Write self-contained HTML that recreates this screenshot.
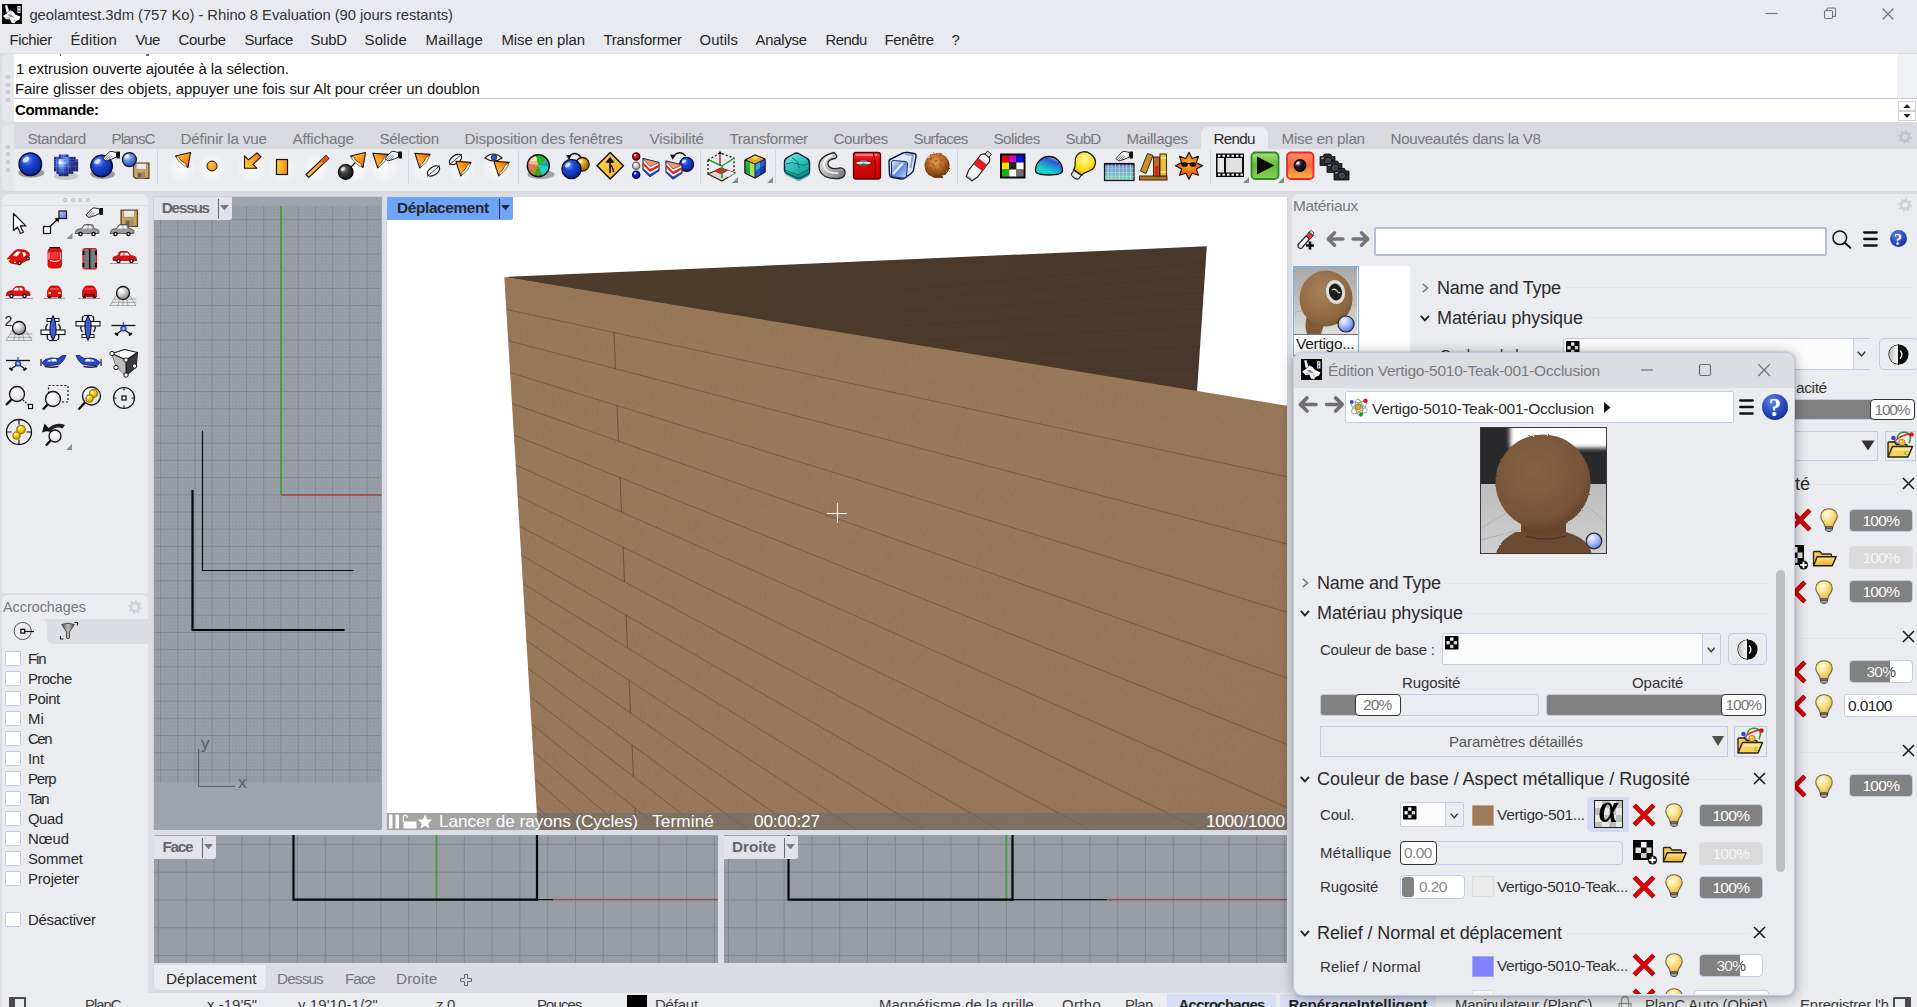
<!DOCTYPE html><html><head><meta charset="utf-8"><title>Rhino</title><style>
html,body{margin:0;padding:0;background:#dddee3;}
#r{position:relative;width:1917px;height:1007px;overflow:hidden;font-family:"Liberation Sans",sans-serif;}
.b{position:absolute;box-sizing:border-box}
.t{position:absolute;white-space:pre;}
svg{overflow:visible}
</style></head><body><div id="r">
<div class="b" style="left:0px;top:0px;width:1917px;height:53px;background:#e9eaef;"></div>
<span class="t" style="left:29.4px;top:8px;font-size:14.8px;line-height:15px;color:#333;letter-spacing:-0.051px;">geolamtest.3dm (757 Ko) - Rhino 8 Evaluation (90 jours restants)</span>
<svg class="b" style="left:2px;top:4px;width:20px;height:20px" viewBox="0 0 21 21"><rect width="21" height="21" fill="#050505"/><path d="M3.200 1.500l2.300-.5 1.800 6.500-2.500 2z" fill="#f4f4f4"/><path d="M1 12.500l4-2.500 3.500-3.500 3 1.500 2.500 3 5.500 2.500-1.500 3-3.500 1.500-1.500 2.500-3-1-1.500-3.500-4 0z" fill="#f6f6f6"/><path d="M5.500 11l3 2.500 4.500 1-3.500-3.500z" fill="#8a8a8a"/><path d="M3.500 14.500l4-1 1.500 2.500z" fill="#b5b5b5"/><path d="M12 16l2 .5-1 2z" fill="#999"/><path d="M16.200 2.200h3.200v7.300h-3.200zM17.300 3.300h1v1.800h-1zM17.300 6.200h1v2.200h-1z" fill="#fff" fill-rule="evenodd"/></svg>
<svg class="b" style="left:1750px;top:0;width:167px;height:28px" viewBox="0 0 167 28"><g stroke="#707070" stroke-width="1.100" fill="none"><path d="M15.5 13.5h12"/><rect x="74.5" y="10.5" width="8" height="8" rx="1.5"/><path d="M77 10.5v-1.5a1 1 0 0 1 1-1h6.5a1 1 0 0 1 1 1v6.5a1 1 0 0 1-1 1h-1.5"/><path d="M132.500 8.500l11 11m0-11l-11 11" stroke-width="1.1"/></g></svg>
<span class="t" style="left:9.5px;top:33px;font-size:14.9px;line-height:15px;color:#262626;letter-spacing:-0.338px;">Fichier</span>
<span class="t" style="left:70.5px;top:33px;font-size:14.9px;line-height:15px;color:#262626;letter-spacing:0.146px;">Édition</span>
<span class="t" style="left:135.5px;top:33px;font-size:14.9px;line-height:15px;color:#262626;letter-spacing:-0.581px;">Vue</span>
<span class="t" style="left:178.5px;top:33px;font-size:14.9px;line-height:15px;color:#262626;letter-spacing:-0.247px;">Courbe</span>
<span class="t" style="left:244.5px;top:33px;font-size:14.9px;line-height:15px;color:#262626;letter-spacing:-0.438px;">Surface</span>
<span class="t" style="left:310.5px;top:33px;font-size:14.9px;line-height:15px;color:#262626;letter-spacing:-0.219px;">SubD</span>
<span class="t" style="left:364.5px;top:33px;font-size:14.9px;line-height:15px;color:#262626;letter-spacing:0.198px;">Solide</span>
<span class="t" style="left:425.5px;top:33px;font-size:14.9px;line-height:15px;color:#262626;letter-spacing:0.270px;">Maillage</span>
<span class="t" style="left:501.5px;top:33px;font-size:14.9px;line-height:15px;color:#262626;letter-spacing:-0.084px;">Mise en plan</span>
<span class="t" style="left:603.5px;top:33px;font-size:14.9px;line-height:15px;color:#262626;letter-spacing:-0.197px;">Transformer</span>
<span class="t" style="left:699.5px;top:33px;font-size:14.9px;line-height:15px;color:#262626;letter-spacing:0.076px;">Outils</span>
<span class="t" style="left:755.5px;top:33px;font-size:14.9px;line-height:15px;color:#262626;letter-spacing:-0.231px;">Analyse</span>
<span class="t" style="left:825.5px;top:33px;font-size:14.9px;line-height:15px;color:#262626;letter-spacing:-0.533px;">Rendu</span>
<span class="t" style="left:884.5px;top:33px;font-size:14.9px;line-height:15px;color:#262626;letter-spacing:-0.284px;">Fenêtre</span>
<span class="t" style="left:951.5px;top:33px;font-size:14.9px;line-height:15px;color:#262626;">?</span>
<div class="b" style="left:2px;top:54px;width:1913px;height:68px;background:#e6e7eb;border-radius:6px 0 0 6px;"></div>
<div class="b" style="left:14px;top:54px;width:1883px;height:68px;background:#fff;"></div>
<div class="b" style="left:14px;top:98px;width:1883px;height:1px;background:#c5c9e0;"></div>
<span class="t" style="left:16.0px;top:62px;font-size:14.9px;line-height:15px;color:#111;letter-spacing:-0.046px;">1 extrusion ouverte ajoutée à la sélection.</span>
<span class="t" style="left:15.0px;top:82px;font-size:14.9px;line-height:15px;color:#111;letter-spacing:-0.029px;">Faire glisser des objets, appuyer une fois sur Alt pour créer un doublon</span>
<span class="t" style="left:15.0px;top:103px;font-size:14.9px;line-height:15px;color:#000;letter-spacing:-0.245px;font-weight:bold;">Commande:</span>
<div class="b" style="left:60px;top:54px;width:1px;height:1.5px;background:#555;"></div><div class="b" style="left:146px;top:54px;width:3px;height:2px;background:#666;"></div>
<div class="b" style="left:5.5px;top:75px;width:3px;height:3px;border:1px solid #b9bac0;border-radius:50%;box-sizing:border-box;width:4px;height:4px;"></div>
<div class="b" style="left:5.5px;top:82.5px;width:3px;height:3px;border:1px solid #b9bac0;border-radius:50%;box-sizing:border-box;width:4px;height:4px;"></div>
<div class="b" style="left:5.5px;top:90px;width:3px;height:3px;border:1px solid #b9bac0;border-radius:50%;box-sizing:border-box;width:4px;height:4px;"></div>
<div class="b" style="left:5.5px;top:97.5px;width:3px;height:3px;border:1px solid #b9bac0;border-radius:50%;box-sizing:border-box;width:4px;height:4px;"></div>
<div class="b" style="left:1897px;top:54px;width:20px;height:44px;background:#eff0f3;"></div>
<div class="b" style="left:1897px;top:98px;width:20px;height:24px;background:#fff;"></div>
<div class="b" style="left:1897px;top:98px;width:20px;height:1px;background:#c5c9e0;"></div>
<div class="b" style="left:1898px;top:101px;width:18px;height:10px;background:#fdfdfd;border:1px solid #cfd0d6;box-sizing:border-box;"></div><div class="b" style="left:1898px;top:111px;width:18px;height:10px;background:#fdfdfd;border:1px solid #cfd0d6;box-sizing:border-box;"></div>
<svg class="b" style="left:1898px;top:101px;width:18px;height:20px" viewBox="0 0 18 20"><path d="M5.5 7l3.500-4 3.500 4zM5.500 13l3.500 4 3.500-4z" fill="#222"/></svg>
<div class="b" style="left:0px;top:122px;width:1917px;height:72px;background:#dddee3;"></div>
<div class="b" style="left:2px;top:125px;width:1915px;height:66px;background:#ebecf0;border-radius:6px 0 0 6px;"></div>
<div class="b" style="left:2px;top:125px;width:12px;height:66px;background:#e6e7eb;border-radius:6px 0 0 6px;"></div>
<div class="b" style="left:14px;top:122px;width:1903px;height:27px;background:#d9dadf;"></div>
<div class="b" style="left:1201px;top:127px;width:67px;height:22.5px;background:#ebecf0;border-radius:7px 7px 0 0;"></div>
<span class="t" style="left:27.5px;top:131px;font-size:15.2px;line-height:15px;color:#76777b;letter-spacing:-0.425px;">Standard</span>
<span class="t" style="left:111.5px;top:131px;font-size:15.2px;line-height:15px;color:#76777b;letter-spacing:-0.999px;">PlansC</span>
<span class="t" style="left:180.5px;top:131px;font-size:15.2px;line-height:15px;color:#76777b;letter-spacing:-0.163px;">Définir la vue</span>
<span class="t" style="left:292.5px;top:131px;font-size:15.2px;line-height:15px;color:#76777b;letter-spacing:-0.188px;">Affichage</span>
<span class="t" style="left:379.5px;top:131px;font-size:15.2px;line-height:15px;color:#76777b;letter-spacing:-0.356px;">Sélection</span>
<span class="t" style="left:464.5px;top:131px;font-size:15.2px;line-height:15px;color:#76777b;letter-spacing:-0.158px;">Disposition des fenêtres</span>
<span class="t" style="left:649.5px;top:131px;font-size:15.2px;line-height:15px;color:#76777b;letter-spacing:-0.102px;">Visibilité</span>
<span class="t" style="left:729.5px;top:131px;font-size:15.2px;line-height:15px;color:#76777b;letter-spacing:-0.353px;">Transformer</span>
<span class="t" style="left:833.5px;top:131px;font-size:15.2px;line-height:15px;color:#76777b;letter-spacing:-0.454px;">Courbes</span>
<span class="t" style="left:913.5px;top:131px;font-size:15.2px;line-height:15px;color:#76777b;letter-spacing:-0.731px;">Surfaces</span>
<span class="t" style="left:993.5px;top:131px;font-size:15.2px;line-height:15px;color:#76777b;letter-spacing:-0.515px;">Solides</span>
<span class="t" style="left:1065.5px;top:131px;font-size:15.2px;line-height:15px;color:#76777b;letter-spacing:-0.720px;">SubD</span>
<span class="t" style="left:1126.5px;top:131px;font-size:15.2px;line-height:15px;color:#76777b;letter-spacing:-0.318px;">Maillages</span>
<span class="t" style="left:1281.5px;top:131px;font-size:15.2px;line-height:15px;color:#76777b;letter-spacing:-0.233px;">Mise en plan</span>
<span class="t" style="left:1390.5px;top:131px;font-size:15.2px;line-height:15px;color:#76777b;letter-spacing:-0.325px;">Nouveautés dans la V8</span>
<span class="t" style="left:1213.5px;top:131px;font-size:15.2px;line-height:15px;color:#2a2a2a;letter-spacing:-0.731px;">Rendu</span>
<div class="b" style="left:5.5px;top:144.7px;width:4px;height:4px;border:1px solid #b9bac0;border-radius:50%;box-sizing:border-box;"></div>
<div class="b" style="left:5.5px;top:152.3px;width:4px;height:4px;border:1px solid #b9bac0;border-radius:50%;box-sizing:border-box;"></div>
<div class="b" style="left:5.5px;top:159.9px;width:4px;height:4px;border:1px solid #b9bac0;border-radius:50%;box-sizing:border-box;"></div>
<div class="b" style="left:5.5px;top:167.5px;width:4px;height:4px;border:1px solid #b9bac0;border-radius:50%;box-sizing:border-box;"></div>
<div class="b" style="left:157px;top:150px;width:1px;height:34px;background:#cfd3e6;"></div>
<div class="b" style="left:408px;top:150px;width:1px;height:34px;background:#cfd3e6;"></div>
<div class="b" style="left:518px;top:150px;width:1px;height:34px;background:#cfd3e6;"></div>
<div class="b" style="left:700px;top:150px;width:1px;height:34px;background:#cfd3e6;"></div>
<div class="b" style="left:775px;top:150px;width:1px;height:34px;background:#cfd3e6;"></div>
<div class="b" style="left:957px;top:150px;width:1px;height:34px;background:#cfd3e6;"></div>
<div class="b" style="left:1210px;top:150px;width:1px;height:34px;background:#cfd3e6;"></div>
<svg class="b" style="left:0;top:0;width:1917px;height:195px" viewBox="0 0 1917 195"><defs><radialGradient id="glow"><stop offset="0" stop-color="#fff" stop-opacity="0.85"/><stop offset="1" stop-color="#fff" stop-opacity="0"/></radialGradient></defs><ellipse cx="31.3" cy="172.775" rx="12.995" ry="5.085" fill="#000" opacity="0.35"/><defs><radialGradient id="g1" cx="0.35" cy="0.3" r="0.8"><stop offset="0" stop-color="#7aa0ff"/><stop offset="0.35" stop-color="#1f48d8"/><stop offset="1" stop-color="#081c7a"/></radialGradient></defs><circle cx="30.3" cy="164.3" r="11.3" fill="url(#g1)" stroke="#050a28" stroke-width="1.300"/><ellipse cx="26.006" cy="159.554" rx="3.616" ry="2.26" fill="#fff" opacity="0.75" transform="rotate(-35 26.006 159.554)"/><ellipse cx="66" cy="176" rx="12" ry="4" fill="#888" opacity="0.35"/><rect x="58.8" y="154.5" width="2.500" height="2.500" fill="#2a3cae"/><rect x="61.2" y="154.5" width="2.500" height="2.500" fill="#3c5fd0"/><rect x="63.6" y="154.5" width="2.500" height="2.500" fill="#3c5fd0"/><rect x="66" y="154.5" width="2.500" height="2.500" fill="#1a2470"/><rect x="54" y="156.9" width="2.500" height="2.500" fill="#1a2470"/><rect x="56.4" y="156.9" width="2.500" height="2.500" fill="#2a3cae"/><rect x="58.8" y="156.9" width="2.500" height="2.500" fill="#2a3cae"/><rect x="61.2" y="156.9" width="2.500" height="2.500" fill="#3c5fd0"/><rect x="63.6" y="156.9" width="2.500" height="2.500" fill="#5d8ae8"/><rect x="66" y="156.9" width="2.500" height="2.500" fill="#5d8ae8"/><rect x="68.4" y="156.9" width="2.500" height="2.500" fill="#2a3cae"/><rect x="70.8" y="156.9" width="2.500" height="2.500" fill="#1a2470"/><rect x="73.2" y="156.9" width="2.500" height="2.500" fill="#1a2470"/><rect x="54" y="159.3" width="2.500" height="2.500" fill="#2a3cae"/><rect x="56.4" y="159.3" width="2.500" height="2.500" fill="#3c5fd0"/><rect x="58.8" y="159.3" width="2.500" height="2.500" fill="#c8e4ff"/><rect x="61.2" y="159.3" width="2.500" height="2.500" fill="#86b6f8"/><rect x="63.6" y="159.3" width="2.500" height="2.500" fill="#5d8ae8"/><rect x="66" y="159.3" width="2.500" height="2.500" fill="#5d8ae8"/><rect x="68.4" y="159.3" width="2.500" height="2.500" fill="#2a3cae"/><rect x="70.8" y="159.3" width="2.500" height="2.500" fill="#1a2470"/><rect x="73.2" y="159.3" width="2.500" height="2.500" fill="#1a2470"/><rect x="75.6" y="159.3" width="2.500" height="2.500" fill="#2a3cae"/><rect x="54" y="161.7" width="2.500" height="2.500" fill="#2a3cae"/><rect x="56.4" y="161.7" width="2.500" height="2.500" fill="#5d8ae8"/><rect x="58.8" y="161.7" width="2.500" height="2.500" fill="#ffffff"/><rect x="61.2" y="161.7" width="2.500" height="2.500" fill="#c8e4ff"/><rect x="63.6" y="161.7" width="2.500" height="2.500" fill="#86b6f8"/><rect x="66" y="161.7" width="2.500" height="2.500" fill="#5d8ae8"/><rect x="68.4" y="161.7" width="2.500" height="2.500" fill="#2a3cae"/><rect x="70.8" y="161.7" width="2.500" height="2.500" fill="#2a3cae"/><rect x="73.2" y="161.7" width="2.500" height="2.500" fill="#1a2470"/><rect x="75.6" y="161.7" width="2.500" height="2.500" fill="#1a2470"/><rect x="54" y="164.1" width="2.500" height="2.500" fill="#2a3cae"/><rect x="56.4" y="164.1" width="2.500" height="2.500" fill="#3c5fd0"/><rect x="58.8" y="164.1" width="2.500" height="2.500" fill="#86b6f8"/><rect x="61.2" y="164.1" width="2.500" height="2.500" fill="#86b6f8"/><rect x="63.6" y="164.1" width="2.500" height="2.500" fill="#5d8ae8"/><rect x="66" y="164.1" width="2.500" height="2.500" fill="#3c5fd0"/><rect x="68.4" y="164.1" width="2.500" height="2.500" fill="#2a3cae"/><rect x="70.8" y="164.1" width="2.500" height="2.500" fill="#1a2470"/><rect x="73.2" y="164.1" width="2.500" height="2.500" fill="#1a2470"/><rect x="75.6" y="164.1" width="2.500" height="2.500" fill="#1a2470"/><rect x="54" y="166.5" width="2.500" height="2.500" fill="#2a3cae"/><rect x="56.4" y="166.5" width="2.500" height="2.500" fill="#2a3cae"/><rect x="58.8" y="166.5" width="2.500" height="2.500" fill="#5d8ae8"/><rect x="61.2" y="166.5" width="2.500" height="2.500" fill="#5d8ae8"/><rect x="63.6" y="166.5" width="2.500" height="2.500" fill="#3c5fd0"/><rect x="66" y="166.5" width="2.500" height="2.500" fill="#2a3cae"/><rect x="68.4" y="166.5" width="2.500" height="2.500" fill="#2a3cae"/><rect x="70.8" y="166.5" width="2.500" height="2.500" fill="#1a2470"/><rect x="73.2" y="166.5" width="2.500" height="2.500" fill="#1a2470"/><rect x="75.6" y="166.5" width="2.500" height="2.500" fill="#1a2470"/><rect x="54" y="168.9" width="2.500" height="2.500" fill="#1a2470"/><rect x="56.4" y="168.9" width="2.500" height="2.500" fill="#2a3cae"/><rect x="58.8" y="168.9" width="2.500" height="2.500" fill="#3c5fd0"/><rect x="61.2" y="168.9" width="2.500" height="2.500" fill="#3c5fd0"/><rect x="63.6" y="168.9" width="2.500" height="2.500" fill="#2a3cae"/><rect x="66" y="168.9" width="2.500" height="2.500" fill="#2a3cae"/><rect x="68.4" y="168.9" width="2.500" height="2.500" fill="#1a2470"/><rect x="70.8" y="168.9" width="2.500" height="2.500" fill="#1a2470"/><rect x="73.2" y="168.9" width="2.500" height="2.500" fill="#1a2470"/><rect x="75.6" y="168.9" width="2.500" height="2.500" fill="#1a2470"/><rect x="56.4" y="171.3" width="2.500" height="2.500" fill="#1a2470"/><rect x="58.8" y="171.3" width="2.500" height="2.500" fill="#2a3cae"/><rect x="61.2" y="171.3" width="2.500" height="2.500" fill="#2a3cae"/><rect x="63.6" y="171.3" width="2.500" height="2.500" fill="#2a3cae"/><rect x="66" y="171.3" width="2.500" height="2.500" fill="#1a2470"/><rect x="68.4" y="171.3" width="2.500" height="2.500" fill="#1a2470"/><rect x="70.8" y="171.3" width="2.500" height="2.500" fill="#1a2470"/><rect x="58.8" y="173.7" width="2.500" height="2.500" fill="#1a2470"/><rect x="61.2" y="173.7" width="2.500" height="2.500" fill="#1a2470"/><rect x="63.6" y="173.7" width="2.500" height="2.500" fill="#1a2470"/><rect x="66" y="173.7" width="2.500" height="2.500" fill="#1a2470"/><ellipse cx="102.6" cy="174.1" rx="12.42" ry="4.86" fill="#000" opacity="0.35"/><defs><radialGradient id="g2" cx="0.35" cy="0.3" r="0.8"><stop offset="0" stop-color="#7aa0ff"/><stop offset="0.35" stop-color="#1f48d8"/><stop offset="1" stop-color="#081c7a"/></radialGradient></defs><circle cx="101.6" cy="166" r="10.8" fill="url(#g2)" stroke="#050a28" stroke-width="1.300"/><ellipse cx="97.496" cy="161.464" rx="3.456" ry="2.16" fill="#fff" opacity="0.75" transform="rotate(-35 97.496 161.464)"/><g transform="translate(103 151)"><path d="M0 7.500L5.500 1.500Q7 0 9 .5L13.500 1.500V6L9 8 3 10z" fill="#fff" stroke="#111" stroke-width="0.900"/><path d="M1.500 8.500l4.500-5M3 9.300l4.500-5M4.800 9.500l4-4.500" stroke="#555" stroke-width="0.700"/><rect x="13.500" y="0.500" width="3.500" height="7" fill="#111"/></g><g transform="translate(132.5 162) scale(1.02941)"><path d="M1 1h15v15H3L1 14z" fill="#c9a560" stroke="#5b431c" stroke-width="1.200"/><rect x="3.500" y="1.500" width="10" height="6" fill="#e8e8e8" stroke="#8a7040" stroke-width="0.500"/><rect x="4.500" y="10" width="8" height="6" fill="#9a8a78"/><rect x="5.500" y="11" width="3" height="4" fill="#7a5a3a"/></g><defs><radialGradient id="g3" cx="0.35" cy="0.3" r="0.8"><stop offset="0" stop-color="#e8f4ff"/><stop offset="0.35" stop-color="#6a98e0"/><stop offset="1" stop-color="#2040a0"/></radialGradient></defs><circle cx="129.4" cy="159.6" r="7" fill="url(#g3)" stroke="#101840" stroke-width="1.300"/><ellipse cx="126.74" cy="156.66" rx="2.24" ry="1.4" fill="#fff" opacity="0.75" transform="rotate(-35 126.74 156.66)"/><circle cx="182" cy="168" r="15" fill="url(#glow)"/><circle cx="212" cy="168" r="15" fill="url(#glow)"/><circle cx="251" cy="168" r="15" fill="url(#glow)"/><circle cx="282" cy="168" r="15" fill="url(#glow)"/><circle cx="316" cy="168" r="15" fill="url(#glow)"/><circle cx="356" cy="168" r="15" fill="url(#glow)"/><circle cx="384" cy="168" r="15" fill="url(#glow)"/><circle cx="425" cy="168" r="15" fill="url(#glow)"/><circle cx="462" cy="168" r="15" fill="url(#glow)"/><circle cx="497" cy="168" r="15" fill="url(#glow)"/><g transform="translate(175 152) scale(1) rotate(0 8 8)"><defs><linearGradient id="g4" x1="0" y1="0" x2="1" y2="1"><stop offset="0" stop-color="#ffd24a"/><stop offset="0.5" stop-color="#ff9a1f"/><stop offset="1" stop-color="#e0560f"/></linearGradient></defs><path d="M0.500 4L15.500 0.500 13 15.500z" fill="url(#g4)" stroke="#1a1208" stroke-width="1.100" stroke-linejoin="round"/><path d="M0.800 4.200Q5 13 12.800 15.200L10 11Q5 9 3.500 5z" fill="#fff3cf" stroke="#1a1208" stroke-width="0.500"/></g><defs><radialGradient id="g5" cx="0.4" cy="0.35" r="0.7"><stop offset="0" stop-color="#ffc24a"/><stop offset="1" stop-color="#f08a10"/></radialGradient></defs><circle cx="212" cy="166" r="5" fill="url(#g5)" stroke="#1a1208" stroke-width="1"/><defs><linearGradient id="g6" x1="1" y1="0" x2="0" y2="1"><stop offset="0" stop-color="#f07a10"/><stop offset="1" stop-color="#ffd040"/></linearGradient></defs><path d="M257 152.800l4 4-8 7.500 4 4h-12.500v-12.500l4 4z" fill="url(#g6)" stroke="#1a1208" stroke-width="1.100" stroke-linejoin="round"/><defs><linearGradient id="g7" x1="0" x2="1"><stop offset="0" stop-color="#ffd040"/><stop offset="1" stop-color="#f58a18"/></linearGradient></defs><rect x="276.500" y="159.500" width="11" height="15" fill="url(#g7)" stroke="#1a1208" stroke-width="1.200"/><path d="M306 174.500L326 155.500l2.800 3L308.800 177.500z" fill="url(#g7)" stroke="#1a1208" stroke-width="1.100"/><path d="M320.500 160.800l5.500-5.300 2.800 3-5.500 5.200z" fill="#e8501a"/><path d="M346 172l10-10" stroke="#111" stroke-width="1.300"/><defs><radialGradient id="g8" cx="0.35" cy="0.3" r="0.8"><stop offset="0" stop-color="#bbb"/><stop offset="0.35" stop-color="#444"/><stop offset="1" stop-color="#0a0a0a"/></radialGradient></defs><circle cx="345.7" cy="172" r="7.3" fill="url(#g8)" stroke="#000" stroke-width="1.300"/><ellipse cx="342.926" cy="168.934" rx="2.336" ry="1.46" fill="#fff" opacity="0.75" transform="rotate(-35 342.926 168.934)"/><g transform="translate(350 152) scale(1) rotate(0 8 8)"><defs><linearGradient id="g9" x1="0" y1="0" x2="1" y2="1"><stop offset="0" stop-color="#ffd24a"/><stop offset="0.5" stop-color="#ff9a1f"/><stop offset="1" stop-color="#e0560f"/></linearGradient></defs><path d="M0.500 4L15.500 0.500 13 15.500z" fill="url(#g9)" stroke="#1a1208" stroke-width="1.100" stroke-linejoin="round"/><path d="M0.800 4.200Q5 13 12.800 15.200L10 11Q5 9 3.500 5z" fill="#fff3cf" stroke="#1a1208" stroke-width="0.500"/></g><g transform="translate(373 152) scale(1) rotate(-95 8 8)"><defs><linearGradient id="g10" x1="0" y1="0" x2="1" y2="1"><stop offset="0" stop-color="#ffd24a"/><stop offset="0.5" stop-color="#ff9a1f"/><stop offset="1" stop-color="#e0560f"/></linearGradient></defs><path d="M0.500 4L15.500 0.500 13 15.500z" fill="url(#g10)" stroke="#1a1208" stroke-width="1.100" stroke-linejoin="round"/><path d="M0.800 4.200Q5 13 12.800 15.200L10 11Q5 9 3.500 5z" fill="#fff3cf" stroke="#1a1208" stroke-width="0.500"/></g><g transform="translate(385 151)"><path d="M0 7.500L5.500 1.500Q7 0 9 .5L13.500 1.500V6L9 8 3 10z" fill="#fff" stroke="#111" stroke-width="0.900"/><path d="M1.500 8.500l4.500-5M3 9.300l4.500-5M4.800 9.500l4-4.500" stroke="#555" stroke-width="0.700"/><rect x="13.500" y="0.500" width="3.500" height="7" fill="#111"/></g><g transform="translate(415 152) scale(1) rotate(-95 8 8)"><defs><linearGradient id="g11" x1="0" y1="0" x2="1" y2="1"><stop offset="0" stop-color="#ffd24a"/><stop offset="0.5" stop-color="#ff9a1f"/><stop offset="1" stop-color="#e0560f"/></linearGradient></defs><path d="M0.500 4L15.500 0.500 13 15.500z" fill="url(#g11)" stroke="#1a1208" stroke-width="1.100" stroke-linejoin="round"/><path d="M0.800 4.200Q5 13 12.800 15.200L10 11Q5 9 3.500 5z" fill="#fff3cf" stroke="#1a1208" stroke-width="0.500"/></g><ellipse cx="433.500" cy="171" rx="7" ry="4" fill="none" stroke="#111" stroke-width="1.100" transform="rotate(-35 433.500 171)"/><path d="M427 176.500l13-11" stroke="#111" stroke-width="0.800"/><ellipse cx="455.500" cy="159.500" rx="7" ry="4" fill="none" stroke="#111" stroke-width="1.100" transform="rotate(-35 455.500 159.500)"/><path d="M449 165l13-11" stroke="#111" stroke-width="0.800"/><g transform="translate(456 160) scale(1) rotate(-95 8 8)"><defs><linearGradient id="g12" x1="0" y1="0" x2="1" y2="1"><stop offset="0" stop-color="#ffd24a"/><stop offset="0.5" stop-color="#ff9a1f"/><stop offset="1" stop-color="#e0560f"/></linearGradient></defs><path d="M0.500 4L15.500 0.500 13 15.500z" fill="url(#g12)" stroke="#1a1208" stroke-width="1.100" stroke-linejoin="round"/><path d="M0.800 4.200Q5 13 12.800 15.200L10 11Q5 9 3.500 5z" fill="#fff3cf" stroke="#1a1208" stroke-width="0.500"/></g><path d="M485 158q8-8 17 0q-8 6-17 0z" fill="#fff" stroke="#111" stroke-width="1.100"/><circle cx="494" cy="157.500" r="2.800" fill="#3a50d0" stroke="#111" stroke-width="0.700"/><g transform="translate(494 160) scale(1) rotate(-95 8 8)"><defs><linearGradient id="g13" x1="0" y1="0" x2="1" y2="1"><stop offset="0" stop-color="#ffd24a"/><stop offset="0.5" stop-color="#ff9a1f"/><stop offset="1" stop-color="#e0560f"/></linearGradient></defs><path d="M0.500 4L15.500 0.500 13 15.500z" fill="url(#g13)" stroke="#1a1208" stroke-width="1.100" stroke-linejoin="round"/><path d="M0.800 4.200Q5 13 12.800 15.200L10 11Q5 9 3.500 5z" fill="#fff3cf" stroke="#1a1208" stroke-width="0.500"/></g><ellipse cx="541" cy="174.500" rx="13.500" ry="4.500" fill="#000" opacity="0.3"/><clipPath id="g14"><circle cx="538.300" cy="165.700" r="11"/></clipPath><g clip-path="url(#g14)"><rect x="527" y="154" width="23" height="24" fill="#e8a040"/><path d="M538 165l-3-12h14v6z" fill="#22b830"/><path d="M538 165l12-6v8z" fill="#1aa0a8"/><path d="M538 165l12 2v8l-6 4z" fill="#20d0c8"/><path d="M538 165l6 14h-12z" fill="#38a028"/><path d="M538 165l-6 14h-6v-8z" fill="#c08830"/><path d="M538 165l-12 6v-8z" fill="#e87070"/><path d="M538 165l-12-2v-8l9-2z" fill="#f0c078"/><ellipse cx="533" cy="159" rx="4" ry="2.500" fill="#fff" opacity="0.6"/></g><circle cx="538.300" cy="165.700" r="11" fill="none" stroke="#111" stroke-width="1.400"/><defs><radialGradient id="g15" cx="0.35" cy="0.3" r="0.8"><stop offset="0" stop-color="#fff0b0"/><stop offset="0.35" stop-color="#e8a820"/><stop offset="1" stop-color="#7a4a08"/></radialGradient></defs><circle cx="582.4" cy="164.3" r="6.8" fill="url(#g15)" stroke="#2a1a04" stroke-width="1.300"/><ellipse cx="579.816" cy="161.444" rx="2.176" ry="1.36" fill="#fff" opacity="0.75" transform="rotate(-35 579.816 161.444)"/><defs><radialGradient id="g16" cx="0.35" cy="0.3" r="0.8"><stop offset="0" stop-color="#7aa0ff"/><stop offset="0.35" stop-color="#1f48d8"/><stop offset="1" stop-color="#081c7a"/></radialGradient></defs><circle cx="571.5" cy="169" r="9.6" fill="url(#g16)" stroke="#050a28" stroke-width="1.300"/><ellipse cx="567.852" cy="164.968" rx="3.072" ry="1.92" fill="#fff" opacity="0.75" transform="rotate(-35 567.852 164.968)"/><path d="M569 157q5-7 12 0" fill="none" stroke="#111" stroke-width="1.300"/><path d="M566 155l5.500 0-2.500 5z" fill="#111"/><defs><linearGradient id="g17" x1="0" y1="0" x2="1" y2="1"><stop offset="0" stop-color="#ffd858"/><stop offset="1" stop-color="#f0b028"/></linearGradient></defs><path d="M610.200 152.500L623.500 165.700 610.200 179 597 165.700z" fill="url(#g17)" stroke="#111" stroke-width="1.500" stroke-linejoin="round"/><path d="M610 173v-13M607 162l3-4 3 4zM613.500 172q-.5-5-3-7" stroke="#111" stroke-width="1.600" fill="none"/><path d="M606.800 162.300l3.200-4.800 3.200 4.800z" fill="#111"/><defs><radialGradient id="g18" cx="0.35" cy="0.3" r="0.8"><stop offset="0" stop-color="#ffb0a0"/><stop offset="0.35" stop-color="#e01010"/><stop offset="1" stop-color="#800"/></radialGradient></defs><circle cx="636.2" cy="156.6" r="3.6" fill="url(#g18)" stroke="#400" stroke-width="1.300"/><ellipse cx="634.832" cy="155.088" rx="1.152" ry="0.72" fill="#fff" opacity="0.75" transform="rotate(-35 634.832 155.088)"/><defs><radialGradient id="g19" cx="0.35" cy="0.3" r="0.8"><stop offset="0" stop-color="#fff"/><stop offset="0.35" stop-color="#ddd"/><stop offset="1" stop-color="#888"/></radialGradient></defs><circle cx="636.2" cy="165.7" r="3.6" fill="url(#g19)" stroke="#666" stroke-width="1.300"/><ellipse cx="634.832" cy="164.188" rx="1.152" ry="0.72" fill="#fff" opacity="0.75" transform="rotate(-35 634.832 164.188)"/><defs><radialGradient id="g20" cx="0.35" cy="0.3" r="0.8"><stop offset="0" stop-color="#9ab0ff"/><stop offset="0.35" stop-color="#1030e0"/><stop offset="1" stop-color="#008"/></radialGradient></defs><circle cx="636.2" cy="174.8" r="3.6" fill="url(#g20)" stroke="#004" stroke-width="1.300"/><ellipse cx="634.832" cy="173.288" rx="1.152" ry="0.72" fill="#fff" opacity="0.75" transform="rotate(-35 634.832 173.288)"/><g transform="translate(643 158.5)"><path d="M0 0l16 4v8l-9 6-7-7z" fill="#fff" stroke="#1a1a40" stroke-width="1.100" stroke-linejoin="round"/><path d="M0 0l16 4-9 4z" fill="#ff9a60" stroke="#1a1a40" stroke-width="0.600"/><path d="M0 3.500l7 7 9-4.500v2.500l-9 5-7-7z" fill="#e02818"/><path d="M0 9.500l7 6 9-5v1.500l-9 6-7-7z" fill="#2848c8"/></g><defs><radialGradient id="g21" cx="0.35" cy="0.3" r="0.8"><stop offset="0" stop-color="#7aa0ff"/><stop offset="0.35" stop-color="#1f48d8"/><stop offset="1" stop-color="#081c7a"/></radialGradient></defs><circle cx="686.6" cy="164.3" r="7" fill="url(#g21)" stroke="#050a28" stroke-width="1.300"/><ellipse cx="683.94" cy="161.36" rx="2.24" ry="1.4" fill="#fff" opacity="0.75" transform="rotate(-35 683.94 161.36)"/><g transform="translate(666 161)"><path d="M0 0l16 4v8l-9 6-7-7z" fill="#fff" stroke="#1a1a40" stroke-width="1.100" stroke-linejoin="round"/><path d="M0 0l16 4-9 4z" fill="#ff9a60" stroke="#1a1a40" stroke-width="0.600"/><path d="M0 3.500l7 7 9-4.500v2.500l-9 5-7-7z" fill="#e02818"/><path d="M0 9.500l7 6 9-5v1.500l-9 6-7-7z" fill="#2848c8"/></g><path d="M673 157q6-8 13-1" fill="none" stroke="#111" stroke-width="1.300"/><path d="M670 154.500l5.500.5-2.800 4.800z" fill="#111"/><g fill="none" stroke="#111" stroke-width="1.300" stroke-dasharray="2 2"><path d="M708 160l12-7 14 5v14M708 160v14"/></g><path d="M708 174l13-6 14 5-13 8z" fill="#d8d8d8" stroke="#3a2010" stroke-width="1.100"/><path d="M721 168l7 2.500-6.500 4-7-3z" fill="#e82020"/><path d="M728.500 170.500l6.500 2.500-6.500 4-6.500-2.500z" fill="#eee"/><path d="M722 178v-12" stroke="#18a028" stroke-width="1.600"/><path d="M722 166l-13-6M722 166l12-8" stroke="#18a028" stroke-width="1.400"/><path d="M720 166v-13" stroke="#a03020" stroke-width="1.400"/><path d="M720 151l-2 3h4z" fill="#111"/><path d="M738 183v-6l-6 6z" fill="#8a8b90"/><path d="M745 160l10-5 10 4v13l-10 6-10-5z" fill="#68c848" stroke="#1a1a30" stroke-width="1.200" stroke-linejoin="round"/><path d="M745 160l10-5 10 4-10 5z" fill="#f0a030"/><path d="M750 157.500l5-2.500 5 2-5 2.500z" fill="#e8e040"/><path d="M755 164l10-5v13l-10 6z" fill="#2858d8"/><path d="M755 164l5-2.500v6.500l-5 3z" fill="#30b0c0"/><path d="M760 168l5-2.500v6.500l-5 3z" fill="#1838a8"/><path d="M745 160l5 2v6.500l-5-2.200z" fill="#20b838"/><path d="M750 168.500l5 2.200v7.300l-5-2.500z" fill="#a8e860"/><path d="M745 166.300l5 2.200v6.500l-5-2z" fill="#28a030"/><path d="M750 162l5 2v6.700l-5-2.200z" fill="#b0e058"/><path d="M745 160l10-5 10 4v13l-10 6-10-5zM755 164v14M745 160l10 4 10-5" fill="none" stroke="#1a1a30" stroke-width="1"/><path d="M773 183v-6l-6 6z" fill="#8a8b90"/><defs><linearGradient id="g22" x1="0" y1="0" x2="0.600" y2="1"><stop offset="0" stop-color="#a8f4f0"/><stop offset="0.4" stop-color="#38d0c8"/><stop offset="1" stop-color="#109890"/></linearGradient></defs><path d="M784.500 162q0-3 3-4.500l7-4q2-1 4 0l8 4.500q3 1.500 3 5v8.500q0 2-2 3l-7 3.500q-2 1-4 0l-10-5q-2-1-2-3z" fill="url(#g22)" stroke="#0a1838" stroke-width="1.400"/><path d="M785 170l13 5 11-5.500M798 175v4M792 158q7 3 7 10M786 164q6-3 12 0 6 3 11-1" fill="none" stroke="#0a6868" stroke-width="0.900"/><path d="M785 171l13 5 11.500-5.500v3.500q0 2-2 3l-7 3.500q-2 1-4 0l-10-5q-2-1-2-3z" fill="#0a8880" opacity="0.55"/><defs><linearGradient id="g23" x1="0" y1="0" x2="1" y2="1"><stop offset="0" stop-color="#f4f4f4"/><stop offset="0.5" stop-color="#b8b8b8"/><stop offset="1" stop-color="#707070"/></linearGradient></defs><path d="M834 152.500q-16 4-15 15 2 12 20 11 7-1 6-7-1-5-8-3-7 1-9-4-1-5 7-6 4-2-1-6z" fill="url(#g23)" stroke="#222" stroke-width="1.300"/><path d="M832 155q-9 4-8 11 2 8 14 7" fill="none" stroke="#fff" stroke-width="1.800" opacity="0.8"/><defs><linearGradient id="g24" x1="0" y1="0" x2="0" y2="1"><stop offset="0" stop-color="#ff4a4a"/><stop offset="0.25" stop-color="#e80808"/><stop offset="1" stop-color="#c00000"/></linearGradient></defs><rect x="853.500" y="152.500" width="27" height="26.500" rx="2.500" fill="url(#g24)" stroke="#5a0000" stroke-width="1.300"/><path d="M856 155h21" stroke="#ff9a9a" stroke-width="1.500"/><path d="M873.500 153q3 12 1 26" stroke="#600" stroke-width="1.100" fill="none"/><ellipse cx="863.500" cy="163" rx="8" ry="2.300" fill="#ddd" stroke="#400" stroke-width="0.900"/><ellipse cx="863.500" cy="165" rx="3.500" ry="1.500" fill="#555"/><ellipse cx="863.500" cy="161" rx="3" ry="1.200" fill="#777"/><defs><linearGradient id="g25" x1="0" y1="0" x2="1" y2="1"><stop offset="0" stop-color="#e8f0ff"/><stop offset="0.5" stop-color="#6088e0"/><stop offset="1" stop-color="#c8d8ff"/></linearGradient></defs><path d="M889 162q0-3 3-3.500l11-5.500q2-1 5-.5l6 1q2.500.5 2 3l-2.500 13.500q-.5 2-2.500 3.500l-6 4.500q-2 1.500-4 1l-8.500-1.500q-3-.5-3-3.500z" fill="#e0e8f8" stroke="#0a1848" stroke-width="1.400"/><path d="M891.500 162.500q0-2 2-2l12 1q2 0 2 2.500l-1 12q0 2-2.500 2l-10.500-1q-2 0-2-2z" fill="url(#g25)" stroke="#0a1848" stroke-width="0.900"/><path d="M893 174l10-11" stroke="#fff" stroke-width="2.500" opacity="0.8"/><path d="M905 154l8 1.200-2.500 13" stroke="#8aa0d8" stroke-width="2" fill="none"/><defs><radialGradient id="g26" cx="0.45" cy="0.35" r="0.7"><stop offset="0" stop-color="#eea060"/><stop offset="0.5" stop-color="#b8642a"/><stop offset="1" stop-color="#4a2006"/></radialGradient><filter id="fz" x="-10%" y="-10%" width="120%" height="120%"><feTurbulence type="fractalNoise" baseFrequency="0.35" numOctaves="2" seed="5" result="n"/><feDisplacementMap in="SourceGraphic" in2="n" scale="3.500"/></filter><filter id="fz2" x="0" y="0" width="100%%" height="100%%"><feTurbulence type="fractalNoise" baseFrequency="0.4" numOctaves="2" seed="8"/><feColorMatrix type="matrix" values="0 0 0 0 0.2  0 0 0 0 0.08  0 0 0 0 0  0 0 0 -3 1.700"/><feComposite in2="SourceGraphic" operator="in"/></filter></defs><circle cx="937" cy="165.500" r="12.500" fill="url(#g26)" filter="url(#fz)"/><circle cx="937" cy="165.500" r="12" fill="#000" filter="url(#fz2)" opacity="0.7"/><g transform="rotate(-52 979 166)"><path d="M963 162.500l6-2h20l3 2v7l-3 2h-20l-6-2z" fill="#f4f4f4" stroke="#222" stroke-width="1.200"/><rect x="977" y="160.500" width="8" height="11" fill="#e02020"/><rect x="992" y="163.500" width="4" height="5" fill="#ddd" stroke="#222" stroke-width="0.900"/><path d="M964 164v4" stroke="#999" stroke-width="1.500"/></g><rect x="1000" y="153.500" width="25.500" height="25" fill="#0a0a0a"/><rect x="1002" y="155.5" width="7.200" height="7" fill="#e80000"/><rect x="1009.2" y="155.5" width="7.200" height="7" fill="#c010c0"/><rect x="1016.4" y="155.5" width="7.200" height="7" fill="#0010e8"/><rect x="1002" y="162.5" width="7.200" height="7" fill="#f8e000"/><rect x="1009.2" y="162.5" width="7.200" height="7" fill="#222"/><rect x="1016.4" y="162.5" width="7.200" height="7" fill="#fff"/><rect x="1002" y="169.5" width="7.200" height="7" fill="#18b018"/><rect x="1009.2" y="169.5" width="7.200" height="7" fill="#fff"/><rect x="1016.4" y="169.5" width="7.200" height="7" fill="#707070"/><defs><linearGradient id="g27" x1="0.800" y1="0" x2="0.200" y2="1"><stop offset="0" stop-color="#f8e8a0"/><stop offset="0.25" stop-color="#2858d8"/><stop offset="0.7" stop-color="#20c8d0"/><stop offset="1" stop-color="#18d8c0"/></linearGradient></defs><path d="M1035.500 170.500a13.500 14 0 0 1 27 0q0 4.500-13.500 4.500t-13.500-4.500z" fill="url(#g27)" stroke="#111" stroke-width="1.300"/><defs><radialGradient id="g28" cx="0.4" cy="0.35" r="0.7"><stop offset="0" stop-color="#fff8a0"/><stop offset="0.6" stop-color="#ffe020"/><stop offset="1" stop-color="#e8b800"/></radialGradient></defs><g transform="rotate(35 1083 165)"><path d="M1083 151.500c-6.500 0-10.500 4.500-10.500 9.500 0 4 2.500 6 4 8.500 1 1.500 1.500 3 1.500 4.500h10c0-1.500.5-3 1.500-4.500 1.500-2.500 4-4.500 4-8.500 0-5-4-9.500-10.500-9.500z" fill="url(#g28)" stroke="#222" stroke-width="1.300"/><path d="M1078.500 174.500h9v3.500q0 2.500-4.500 2.500t-4.500-2.500z" fill="#e8e8e8" stroke="#222" stroke-width="1.100"/></g><defs><linearGradient id="g29" x1="0" y1="0" x2="0" y2="1"><stop offset="0" stop-color="#7088d8"/><stop offset="1" stop-color="#78d8b0"/></linearGradient></defs><rect x="1104.500" y="163.500" width="29.500" height="17" fill="url(#g29)" stroke="#111" stroke-width="1.200"/><path d="M1104.500 164h29.500" stroke="#111" stroke-width="1.500"/><path d="M1108.2 164v16" stroke="#d8e8f8" stroke-width="0.700" opacity="0.8"/><path d="M1111.9 164v16" stroke="#d8e8f8" stroke-width="0.700" opacity="0.8"/><path d="M1115.6 164v16" stroke="#d8e8f8" stroke-width="0.700" opacity="0.8"/><path d="M1119.3 164v16" stroke="#d8e8f8" stroke-width="0.700" opacity="0.8"/><path d="M1123 164v16" stroke="#d8e8f8" stroke-width="0.700" opacity="0.8"/><path d="M1126.7 164v16" stroke="#d8e8f8" stroke-width="0.700" opacity="0.8"/><path d="M1130.4 164v16" stroke="#d8e8f8" stroke-width="0.700" opacity="0.8"/><path d="M1105 168.2h29" stroke="#d8e8f8" stroke-width="0.600" opacity="0.7"/><path d="M1105 172.4h29" stroke="#d8e8f8" stroke-width="0.600" opacity="0.7"/><path d="M1105 176.6h29" stroke="#d8e8f8" stroke-width="0.600" opacity="0.7"/><g transform="translate(1116 151)"><path d="M0 7.500L5.500 1.500Q7 0 9 .5L13.500 1.500V6L9 8 3 10z" fill="#fff" stroke="#111" stroke-width="0.900"/><path d="M1.500 8.500l4.500-5M3 9.300l4.500-5M4.800 9.500l4-4.500" stroke="#555" stroke-width="0.700"/><rect x="13.500" y="0.500" width="3.500" height="7" fill="#111"/></g><rect x="1139.500" y="176" width="27.500" height="4" fill="#b07828" stroke="#3a2408" stroke-width="1"/><path d="M1140.500 171l7-17.500 5.500 2-7 18z" fill="#c89030" stroke="#3a2408" stroke-width="1"/><rect x="1153.500" y="157" width="6" height="19" fill="#c06820" stroke="#3a2408" stroke-width="1"/><rect x="1155" y="166" width="3.500" height="9" fill="#e02020"/><rect x="1160" y="154" width="6.500" height="22" fill="#e8c038" stroke="#3a2408" stroke-width="1"/><path d="M1160.500 158h6M1160.500 172h6" stroke="#fff" stroke-width="0.800"/><defs><radialGradient id="g30" cx="0.5" cy="0.4" r="0.6"><stop offset="0" stop-color="#ffb020"/><stop offset="1" stop-color="#e84808"/></radialGradient></defs><path d="M1189.0 152.3L1192.1 158.4L1198.5 156.3L1196.4 162.7L1202.5 165.8L1196.4 168.9L1198.5 175.3L1192.1 173.2L1189.0 179.3L1185.9 173.2L1179.5 175.3L1181.6 168.9L1175.5 165.8L1181.6 162.7L1179.5 156.3L1185.9 158.4z" fill="url(#g30)" stroke="#111" stroke-width="1.100" stroke-linejoin="round"/><ellipse cx="1184.500" cy="164.500" rx="3.300" ry="2.300" fill="#111"/><ellipse cx="1193" cy="164.500" rx="3.300" ry="2.300" fill="#111"/><path d="M1181 163.500h15" stroke="#111" stroke-width="1.100"/><rect x="1216" y="153.500" width="28" height="23.500" fill="#0a0a0a"/><rect x="1217.500" y="158" width="6.500" height="14.500" fill="#e8e8e8"/><rect x="1226" y="158" width="16" height="14.500" fill="#e0e0e0"/><rect x="1218" y="154.800" width="2.400" height="2" fill="#fff"/><rect x="1218" y="173.700" width="2.400" height="2" fill="#fff"/><rect x="1222.5" y="154.800" width="2.400" height="2" fill="#fff"/><rect x="1222.5" y="173.700" width="2.400" height="2" fill="#fff"/><rect x="1227" y="154.800" width="2.400" height="2" fill="#fff"/><rect x="1227" y="173.700" width="2.400" height="2" fill="#fff"/><rect x="1231.5" y="154.800" width="2.400" height="2" fill="#fff"/><rect x="1231.5" y="173.700" width="2.400" height="2" fill="#fff"/><rect x="1236" y="154.800" width="2.400" height="2" fill="#fff"/><rect x="1236" y="173.700" width="2.400" height="2" fill="#fff"/><rect x="1240.5" y="154.800" width="2.400" height="2" fill="#fff"/><rect x="1240.5" y="173.700" width="2.400" height="2" fill="#fff"/><path d="M1249 183v-6l-6 6z" fill="#8a8b90"/><defs><linearGradient id="g31" x1="0" y1="0" x2="0" y2="1"><stop offset="0" stop-color="#a8e080"/><stop offset="0.45" stop-color="#68b838"/><stop offset="1" stop-color="#88d050"/></linearGradient></defs><rect x="1251.500" y="152.500" width="27" height="26.500" rx="4" fill="url(#g31)" stroke="#2a8a2a" stroke-width="1.800"/><path d="M1257 156.500l17.500 9-17.500 9z" fill="#0a0a0a"/><path d="M1284 183v-6l-6 6z" fill="#8a8b90"/><defs><linearGradient id="g32" x1="0" y1="0" x2="0" y2="1"><stop offset="0" stop-color="#ff8a70"/><stop offset="0.5" stop-color="#f86838"/><stop offset="1" stop-color="#ffb848"/></linearGradient></defs><rect x="1287" y="152.500" width="26.500" height="26.500" rx="4" fill="url(#g32)" stroke="#e82828" stroke-width="1.800"/><defs><radialGradient id="g33" cx="0.35" cy="0.3" r="0.8"><stop offset="0" stop-color="#ccc"/><stop offset="0.35" stop-color="#222"/><stop offset="1" stop-color="#000"/></radialGradient></defs><circle cx="1300" cy="165.5" r="5.8" fill="url(#g33)" stroke="#000" stroke-width="1.300"/><ellipse cx="1297.8" cy="163.064" rx="1.856" ry="1.16" fill="#fff" opacity="0.75" transform="rotate(-35 1297.8 163.064)"/><g transform="translate(1320 153)"><path d="M0 3.500h3l1.500-2.500h6l1.500 2.500h3v9h-15z" fill="#2a2a2e" stroke="#0a0a0a" stroke-width="0.800"/><circle cx="8" cy="8" r="3.600" fill="#555" stroke="#000" stroke-width="0.800"/><circle cx="8" cy="8" r="1.800" fill="#2a3a6a"/><rect x="1" y="4.500" width="3" height="1.500" fill="#888"/></g><g transform="translate(1327 160)"><path d="M0 3.500h3l1.500-2.500h6l1.500 2.500h3v9h-15z" fill="#2a2a2e" stroke="#0a0a0a" stroke-width="0.800"/><circle cx="8" cy="8" r="3.600" fill="#555" stroke="#000" stroke-width="0.800"/><circle cx="8" cy="8" r="1.800" fill="#2a3a6a"/><rect x="1" y="4.500" width="3" height="1.500" fill="#888"/></g><g transform="translate(1334 167.5)"><path d="M0 3.500h3l1.500-2.500h6l1.500 2.500h3v9h-15z" fill="#2a2a2e" stroke="#0a0a0a" stroke-width="0.800"/><circle cx="8" cy="8" r="3.600" fill="#555" stroke="#000" stroke-width="0.800"/><circle cx="8" cy="8" r="1.800" fill="#2a3a6a"/><rect x="1" y="4.500" width="3" height="1.500" fill="#888"/></g></svg>
<svg class="b" style="left:1896.5px;top:129px;width:16px;height:16px" viewBox="0 0 16 16"><path d="M14.97 8.69L14.70 10.03L12.57 10.44L12.00 11.29L12.44 13.41L11.30 14.17L9.50 12.96L8.51 13.16L7.31 14.97L5.97 14.70L5.56 12.57L4.71 12.00L2.59 12.44L1.83 11.30L3.04 9.50L2.84 8.51L1.03 7.31L1.30 5.97L3.43 5.56L4.00 4.71L3.56 2.59L4.70 1.83L6.50 3.04L7.49 2.84L8.69 1.03L10.03 1.30L10.44 3.43L11.29 4.00L13.41 3.56L14.17 4.70L12.96 6.50L13.16 7.49z" fill="#c4c5ca"/><circle cx="8" cy="8" r="2.52" fill="#d9dadf"/></svg>
<div class="b" style="left:0px;top:191px;width:1917px;height:816px;background:#dddee3;"></div>
<div class="b" style="left:0px;top:191px;width:1917px;height:3px;background:#dadbe0;"></div>
<div class="b" style="left:2px;top:194px;width:146px;height:398.5px;background:#ebecf0;border-radius:7px 7px 0 0;"></div>
<div class="b" style="left:2px;top:205px;width:146px;height:1px;background:#dcdde2;"></div>
<div class="b" style="left:63px;top:197.5px;width:4px;height:4px;border:1px solid #b9bac0;border-radius:50%;box-sizing:border-box;"></div>
<div class="b" style="left:70.5px;top:197.5px;width:4px;height:4px;border:1px solid #b9bac0;border-radius:50%;box-sizing:border-box;"></div>
<div class="b" style="left:78px;top:197.5px;width:4px;height:4px;border:1px solid #b9bac0;border-radius:50%;box-sizing:border-box;"></div>
<div class="b" style="left:85.5px;top:197.5px;width:4px;height:4px;border:1px solid #b9bac0;border-radius:50%;box-sizing:border-box;"></div>
<svg class="b" style="left:0;top:205px;width:150px;height:250px" viewBox="0 205 150 250"><path d="M13.500 213.500v17l4-3.500 3 6.500 2.800-1.300-3-6.300h5.500z" fill="#fff" stroke="#111" stroke-width="1.200" stroke-linejoin="round"/><path d="M49 227.500l9-8.500" stroke="#111" stroke-width="1.300"/><path d="M59.500 217.500l-5 1 4 4z" fill="#111"/><rect x="43.500" y="226.500" width="7" height="7" fill="#f4f4f4" stroke="#111" stroke-width="1.200"/><defs><linearGradient id="g34" x1="0" y1="0" x2="1" y2="1"><stop offset="0" stop-color="#b8c8ff"/><stop offset="1" stop-color="#5870f0"/></linearGradient></defs><rect x="59" y="211" width="7.500" height="7.500" fill="url(#g34)" stroke="#111" stroke-width="1.200"/><path d="M72.5 239v-6l-6 6z" fill="#8a8b90"/><g transform="translate(75 224)"><path d="M0.500 8.500q0-3 3-3.500l3-.5 2.500-3.500q.5-.5 1.500-.5h6q1 0 1.500 1l1 3 3.500 1q1.500.5 1.500 2v2h-24z" fill="#9a9a9a" stroke="#333" stroke-width="0.700"/><path d="M7.500 4.500l2-2.800h3v2.800zM13.500 1.700h2.500l1 2.800h-3.500z" fill="#fff"/><circle cx="5.500" cy="10" r="2.300" fill="#111"/><circle cx="5.500" cy="10" r="1" fill="#ddd"/><circle cx="18.500" cy="10" r="2.300" fill="#111"/><circle cx="18.500" cy="10" r="1" fill="#ddd"/></g><g transform="translate(86 207.5)"><path d="M0 7.500L5.500 1.500Q7 0 9 .5L13.500 1.500V6L9 8 3 10z" fill="#fff" stroke="#111" stroke-width="0.900"/><path d="M1.500 8.500l4.500-5M3 9.300l4.500-5M4.800 9.500l4-4.500" stroke="#555" stroke-width="0.700"/><rect x="13.500" y="0.500" width="3.500" height="7" fill="#111"/></g><g transform="translate(120 209) scale(1.08824)"><path d="M1 1h15v15H3L1 14z" fill="#c9a560" stroke="#5b431c" stroke-width="1.200"/><rect x="3.500" y="1.500" width="10" height="6" fill="#e8e8e8" stroke="#8a7040" stroke-width="0.500"/><rect x="4.500" y="10" width="8" height="6" fill="#9a8a78"/><rect x="5.500" y="11" width="3" height="4" fill="#7a5a3a"/></g><g transform="translate(110 224)"><path d="M0.500 8.500q0-3 3-3.500l3-.5 2.500-3.500q.5-.5 1.500-.5h6q1 0 1.500 1l1 3 3.500 1q1.500.5 1.500 2v2h-24z" fill="#9a9a9a" stroke="#333" stroke-width="0.700"/><path d="M7.500 4.500l2-2.800h3v2.800zM13.500 1.700h2.500l1 2.800h-3.500z" fill="#fff"/><circle cx="5.500" cy="10" r="2.300" fill="#111"/><circle cx="5.500" cy="10" r="1" fill="#ddd"/><circle cx="18.500" cy="10" r="2.300" fill="#111"/><circle cx="18.500" cy="10" r="1" fill="#ddd"/></g><g transform="translate(7 249)"><path d="M0.500 9.500l7-7.500q1.500-1.500 4-1.500l5.500.5q3 .5 5 3l.5 2.500-2 4.500-9 4.500-8-1.500z" fill="#e01010" stroke="#900" stroke-width="0.700"/><path d="M6 6.500l4-4 4 .3-4.500 4.700zM15.500 3l2.500.5 1.500 2-3 3z" fill="#fff"/><circle cx="12.500" cy="14" r="2.200" fill="#222"/><circle cx="12.500" cy="14" r="0.900" fill="#bbb"/><circle cx="21" cy="9.500" r="2" fill="#222"/><circle cx="21" cy="9.500" r="0.800" fill="#bbb"/><rect x="1" y="10" width="2" height="1.500" fill="#ffe020"/><rect x="7" y="12.500" width="2" height="1.500" fill="#ffe020"/></g><g transform="translate(47.500 247)"><rect x="2" y="0" width="10.500" height="1.500" fill="#111"/><path d="M0.500 4q0-2.500 2.500-2.500h8.500q2.500 0 2.500 2.500v14q0 3-3 3h-7.500q-3 0-3-3z" fill="#e01010" stroke="#b00" stroke-width="0.800"/><path d="M2.500 5h9.500l-1 7h-7.500z" fill="#f03838"/><path d="M2.500 13.500q4.800 2 9.500 0" stroke="#fff" stroke-width="1" fill="none"/><path d="M1.500 5.500v7M13 5.500v7" stroke="#fff" stroke-width="0.900"/><rect x="1" y="20.800" width="2.500" height="1.200" fill="#ffe020"/><rect x="11" y="20.800" width="2.500" height="1.200" fill="#ffe020"/></g><g transform="translate(82.500 248)"><rect x="0.500" y="0.500" width="13.500" height="20.500" rx="2" fill="#78787e" stroke="#e01010" stroke-width="1.200"/><path d="M7.200 1v20" stroke="#111" stroke-width="1.500"/><rect x="0" y="3" width="2" height="4" fill="#111"/><rect x="12.500" y="3" width="2" height="4" fill="#111"/><rect x="0" y="15" width="2" height="4" fill="#111"/><rect x="12.500" y="15" width="2" height="4" fill="#111"/></g><g transform="translate(113 251) translate(24 0) scale(-1 1)"><path d="M0.500 8.500q0-3 3-3.500l3-.5 2.500-3.500q.5-.5 1.500-.5h6q1 0 1.500 1l1 3 3.500 1q1.500.5 1.500 2v2h-24z" fill="#e01010" stroke="#800" stroke-width="0.700"/><path d="M7.500 4.500l2-2.800h3v2.800zM13.500 1.700h2.500l1 2.800h-3.500z" fill="#fff"/><circle cx="5.500" cy="10" r="2.300" fill="#111"/><circle cx="5.500" cy="10" r="1" fill="#ddd"/><circle cx="18.500" cy="10" r="2.300" fill="#111"/><circle cx="18.500" cy="10" r="1" fill="#ddd"/></g><path d="M110 263.500h28" stroke="#888" stroke-width="0.800"/><g transform="translate(6 286)"><path d="M0.500 8.500q0-3 3-3.500l3-.5 2.500-3.500q.5-.5 1.500-.5h6q1 0 1.500 1l1 3 3.500 1q1.500.5 1.500 2v2h-24z" fill="#e01010" stroke="#800" stroke-width="0.700"/><path d="M7.500 4.500l2-2.800h3v2.800zM13.500 1.700h2.500l1 2.800h-3.500z" fill="#fff"/><circle cx="5.500" cy="10" r="2.300" fill="#111"/><circle cx="5.500" cy="10" r="1" fill="#ddd"/><circle cx="18.500" cy="10" r="2.300" fill="#111"/><circle cx="18.500" cy="10" r="1" fill="#ddd"/></g><path d="M5 298.500h28" stroke="#888" stroke-width="0.800"/><g transform="translate(46.5 286)"><path d="M1 11V6q0-1.500 1-3l1.200-2q.5-1 2-1h5.600q1.500 0 2 1l1.200 2q1 1.500 1 3v5z" fill="#e01010" stroke="#900" stroke-width="0.700"/><rect x="1.500" y="10.500" width="3" height="2" fill="#111"/><rect x="11.500" y="10.500" width="3" height="2" fill="#111"/><rect x="2" y="6" width="2.500" height="2" fill="#ffe020"/><rect x="11.500" y="6" width="2.500" height="2" fill="#ffe020"/><path d="M3.500 3h9" stroke="#f88" stroke-width="1"/></g><path d="M43 298.500h22" stroke="#888" stroke-width="0.800"/><g transform="translate(81.5 286)"><path d="M1 11V6q0-1.500 1-3l1.200-2q.5-1 2-1h5.600q1.500 0 2 1l1.200 2q1 1.500 1 3v5z" fill="#e01010" stroke="#900" stroke-width="0.700"/><rect x="1.500" y="10.500" width="3" height="2" fill="#111"/><rect x="11.500" y="10.500" width="3" height="2" fill="#111"/><rect x="2.500" y="7.800" width="11" height="1.700" fill="#500"/><path d="M3.500 3h9" stroke="#f66" stroke-width="1"/></g><path d="M78 298.500h22" stroke="#888" stroke-width="0.800"/><g stroke="#888" stroke-width="0.700" fill="none"><path d="M116 296l-6 9.500h26l-6-9.500zM114 299h22.500M112 302.3h24.300M120 296l-2 9.500M126 296l2 9.500M123 296v9.500"/></g><defs><radialGradient id="g35" cx="0.35" cy="0.3" r="0.8"><stop offset="0" stop-color="#fff"/><stop offset="0.35" stop-color="#ddd"/><stop offset="1" stop-color="#777"/></radialGradient></defs><circle cx="123" cy="293" r="6.5" fill="url(#g35)" stroke="#111" stroke-width="1.300"/><ellipse cx="120.53" cy="290.27" rx="2.08" ry="1.3" fill="#fff" opacity="0.75" transform="rotate(-35 120.53 290.27)"/><g stroke="#888" stroke-width="0.700" fill="none"><path d="M12 331l-6 9.500h26l-6-9.500zM10 334h22.500M8 337.3h24.300M16 331l-2 9.500M22 331l2 9.500M19 331v9.500"/></g><defs><radialGradient id="g36" cx="0.35" cy="0.3" r="0.8"><stop offset="0" stop-color="#fff"/><stop offset="0.35" stop-color="#ddd"/><stop offset="1" stop-color="#777"/></radialGradient></defs><circle cx="19" cy="328" r="6.5" fill="url(#g36)" stroke="#111" stroke-width="1.300"/><ellipse cx="16.53" cy="325.27" rx="2.08" ry="1.3" fill="#fff" opacity="0.75" transform="rotate(-35 16.53 325.27)"/><text x="4.500" y="326" font-family="Liberation Sans" font-size="14" fill="#111">2</text><g transform="translate(53 328) rotate(0)"><rect x="-12" y="2" width="24" height="4.500" fill="#fff" stroke="#111" stroke-width="1.100"/><rect x="-6" y="-9.500" width="12" height="3" fill="#fff" stroke="#111" stroke-width="1"/><path d="M0-12.500q3.500 6 3 18l-3 7-3-7q-.5-12 3-18z" fill="#3a5ad8" stroke="#111" stroke-width="1"/><path d="M-4 12.500h8" stroke="#111" stroke-width="1.200"/><path d="M-5.500-4q-2.500 3-1.500 6M5.500-4q2.500 3 1.500 6M-5.500 7q-1 3 1 5M5.500 7q1 3-1 5" stroke="#111" stroke-width="1.200" fill="none"/></g><g transform="translate(88 328) rotate(180)"><rect x="-12" y="2" width="24" height="4.500" fill="#fff" stroke="#111" stroke-width="1.100"/><rect x="-6" y="-9.500" width="12" height="3" fill="#fff" stroke="#111" stroke-width="1"/><path d="M0-12.500q3.500 6 3 18l-3 7-3-7q-.5-12 3-18z" fill="#3a5ad8" stroke="#111" stroke-width="1"/><path d="M-4 12.500h8" stroke="#111" stroke-width="1.200"/><path d="M-5.500-4q-2.500 3-1.500 6M5.500-4q2.500 3 1.500 6M-5.500 7q-1 3 1 5M5.500 7q1 3-1 5" stroke="#111" stroke-width="1.200" fill="none"/></g><g transform="translate(123.5 327.5)"><path d="M-12-2h24" stroke="#111" stroke-width="1.300"/><path d="M0-5.500v4" stroke="#2848c8" stroke-width="1.300"/><circle cx="0" cy="1" r="2.800" fill="#3a5ad8" stroke="#1a2a80" stroke-width="0.700"/><circle cx="0" cy="1" r="1.200" fill="#ccd"/><path d="M-2 3l-5 3.500M2 3l5 3.500" stroke="#111" stroke-width="1.300"/><path d="M-8.500 5.500l3 2.500M8.500 5.500l-3 2.500" stroke="#111" stroke-width="2.200"/></g><g transform="translate(18 362.5)"><path d="M-12-2h24" stroke="#111" stroke-width="1.300"/><path d="M0-5.500v4" stroke="#2848c8" stroke-width="1.300"/><circle cx="0" cy="1" r="2.800" fill="#3a5ad8" stroke="#1a2a80" stroke-width="0.700"/><circle cx="0" cy="1" r="1.200" fill="#ccd"/><path d="M-2 3l-5 3.500M2 3l5 3.500" stroke="#111" stroke-width="1.300"/><path d="M-8.500 5.500l3 2.500M8.500 5.500l-3 2.500" stroke="#111" stroke-width="2.200"/></g><g transform="translate(40 356)"><path d="M1 3v7" stroke="#111" stroke-width="1.200"/><path d="M2 6.500q3-4 9-4.500l7 .5 4.500-3h3.500l-2.500 5-3.500 3.500q-8 2-14 1.500-3-.5-4-3z" fill="#2848c8" stroke="#101860" stroke-width="0.800"/><path d="M7 5.500q2-2.500 5-2.500h4l1 2.500z" fill="#fff"/><path d="M11 3v2.500" stroke="#2848c8" stroke-width="0.800"/><path d="M4 9.500q8 2 15 0l-1 1.800q-6 1.200-13 0z" fill="#222"/></g><g transform="translate(75 356) translate(27 0) scale(-1 1)"><path d="M1 3v7" stroke="#111" stroke-width="1.200"/><path d="M2 6.500q3-4 9-4.500l7 .5 4.500-3h3.500l-2.500 5-3.500 3.500q-8 2-14 1.500-3-.5-4-3z" fill="#2848c8" stroke="#101860" stroke-width="0.800"/><path d="M7 5.500q2-2.500 5-2.500h4l1 2.500z" fill="#fff"/><path d="M11 3v2.500" stroke="#2848c8" stroke-width="0.800"/><path d="M4 9.500q8 2 15 0l-1 1.800q-6 1.200-13 0z" fill="#222"/></g><path d="M112 353.500l12.500-4 13 3-1.500 14.500-10 8.500-9.500-9z" fill="#fff" stroke="#111" stroke-width="1.200" stroke-linejoin="round"/><path d="M112 353.500l14 6.500-.5 15.500-9.500-9z" fill="#bcbcbc"/><path d="M126 360l11.500-7.500-1.500 14.500-10 8.500z" fill="#3a3a3a"/><path d="M112 353.500l14 6.500 11.500-7.500M126 360v15" stroke="#111" stroke-width="1.100" fill="none"/><circle cx="112" cy="353.5" r="2.200" fill="#fff" stroke="#111" stroke-width="1"/><circle cx="126" cy="360" r="2.200" fill="#fff" stroke="#111" stroke-width="1"/><circle cx="116" cy="367.5" r="2.200" fill="#fff" stroke="#111" stroke-width="1"/><circle cx="134.5" cy="366" r="2.200" fill="#fff" stroke="#111" stroke-width="1"/><circle cx="126" cy="375" r="2.200" fill="#fff" stroke="#111" stroke-width="1"/><path d="M11.75 399.25L6 405" stroke="#111" stroke-width="2.400"/><defs><radialGradient id="g37" cx="0.4" cy="0.35" r="0.7"><stop offset="0" stop-color="#fff"/><stop offset="1" stop-color="#dcdcdc"/></radialGradient></defs><circle cx="17" cy="394" r="7.5" fill="url(#g37)" stroke="#111" stroke-width="1.300"/><path d="M23 400l5 4.500" stroke="#111" stroke-width="1.100" stroke-dasharray="1.500 1.500"/><rect x="28.500" y="404.500" width="4" height="4" fill="#fff" stroke="#111" stroke-width="1.200"/><rect x="48.500" y="385.500" width="19.500" height="16.500" fill="none" stroke="#111" stroke-width="1.200" stroke-dasharray="2 2"/><path d="M47.75 404.25L43 409.5" stroke="#111" stroke-width="2.400"/><defs><radialGradient id="g38" cx="0.4" cy="0.35" r="0.7"><stop offset="0" stop-color="#fff"/><stop offset="1" stop-color="#dcdcdc"/></radialGradient></defs><circle cx="53" cy="399" r="7.5" fill="url(#g38)" stroke="#111" stroke-width="1.300"/><path d="M85.2 402.3L78.5 409.5" stroke="#111" stroke-width="2.400"/><defs><radialGradient id="g39" cx="0.4" cy="0.35" r="0.7"><stop offset="0" stop-color="#fff"/><stop offset="1" stop-color="#dcdcdc"/></radialGradient></defs><circle cx="91.5" cy="396" r="9" fill="url(#g39)" stroke="#111" stroke-width="1.300"/><defs><radialGradient id="g40" cx="0.35" cy="0.3" r="0.8"><stop offset="0" stop-color="#fff8b0"/><stop offset="0.35" stop-color="#ffd820"/><stop offset="1" stop-color="#c89000"/></radialGradient></defs><circle cx="93.5" cy="393.5" r="4" fill="url(#g40)" stroke="#a07800" stroke-width="1.300"/><ellipse cx="91.98" cy="391.82" rx="1.28" ry="0.8" fill="#fff" opacity="0.75" transform="rotate(-35 91.98 391.82)"/><defs><radialGradient id="g41" cx="0.35" cy="0.3" r="0.8"><stop offset="0" stop-color="#fff8b0"/><stop offset="0.35" stop-color="#ffd820"/><stop offset="1" stop-color="#c89000"/></radialGradient></defs><circle cx="89.5" cy="398.5" r="3.6" fill="url(#g41)" stroke="#a07800" stroke-width="1.300"/><ellipse cx="88.132" cy="396.988" rx="1.152" ry="0.72" fill="#fff" opacity="0.75" transform="rotate(-35 88.132 396.988)"/><circle cx="124" cy="398" r="10.500" fill="none" stroke="#111" stroke-width="1.200"/><path d="M124 387.500v3M124 405.500v3M113.500 398h3M131.500 398h3" stroke="#111" stroke-width="1.100"/><rect x="122" y="396" width="4" height="4" fill="#fff" stroke="#111" stroke-width="1.300"/><circle cx="19" cy="432" r="12.500" fill="none" stroke="#111" stroke-width="1.300"/><path d="M19 419.500v5M19 439.500v5M6.500 432h5M26.500 432h5" stroke="#111" stroke-width="1.100"/><defs><radialGradient id="g42" cx="0.35" cy="0.3" r="0.8"><stop offset="0" stop-color="#fff8b0"/><stop offset="0.35" stop-color="#ffd820"/><stop offset="1" stop-color="#c89000"/></radialGradient></defs><circle cx="21" cy="429.5" r="4.2" fill="url(#g42)" stroke="#a07800" stroke-width="1.300"/><ellipse cx="19.404" cy="427.736" rx="1.344" ry="0.84" fill="#fff" opacity="0.75" transform="rotate(-35 19.404 427.736)"/><defs><radialGradient id="g43" cx="0.35" cy="0.3" r="0.8"><stop offset="0" stop-color="#fff8b0"/><stop offset="0.35" stop-color="#ffd820"/><stop offset="1" stop-color="#c89000"/></radialGradient></defs><circle cx="16.5" cy="435.5" r="3.6" fill="url(#g43)" stroke="#a07800" stroke-width="1.300"/><ellipse cx="15.132" cy="433.988" rx="1.152" ry="0.72" fill="#fff" opacity="0.75" transform="rotate(-35 15.132 433.988)"/><path d="M50.8 440.2L46 445.5" stroke="#111" stroke-width="2.400"/><defs><radialGradient id="g44" cx="0.4" cy="0.35" r="0.7"><stop offset="0" stop-color="#fff"/><stop offset="1" stop-color="#dcdcdc"/></radialGradient></defs><circle cx="55" cy="436" r="6" fill="url(#g44)" stroke="#111" stroke-width="1.300"/><path d="M46 431q8-10 19-6l-2.500 3.500q-7-3-12.500 3.500z" fill="#222"/><path d="M42 432.500l2.500-9 6 6.500z" fill="#111"/><path d="M72 450v-6l-6 6z" fill="#8a8b90"/></svg>
<div class="b" style="left:2px;top:595px;width:146px;height:412px;background:#ebecf0;border-radius:5px 6px 0 0;"></div>
<span class="t" style="left:3.0px;top:600px;font-size:14.4px;line-height:14px;color:#76777b;letter-spacing:-0.022px;">Accrochages</span>
<div class="b" style="left:47px;top:619px;width:101px;height:25px;background:#dcdde2;border-radius:0 0 0 6px;"></div>
<div class="b" style="left:40px;top:619px;width:10px;height:8px;background:#dcdde2;"></div>
<div class="b" style="left:2px;top:619px;width:45px;height:25px;background:#ebecf0;border-radius:0 6px 0 0;"></div>
<svg class="b" style="left:127.4px;top:599px;width:16px;height:16px" viewBox="0 0 16 16"><path d="M14.97 8.69L14.70 10.03L12.57 10.44L12.00 11.29L12.44 13.41L11.30 14.17L9.50 12.96L8.51 13.16L7.31 14.97L5.97 14.70L5.56 12.57L4.71 12.00L2.59 12.44L1.83 11.30L3.04 9.50L2.84 8.51L1.03 7.31L1.30 5.97L3.43 5.56L4.00 4.71L3.56 2.59L4.70 1.83L6.50 3.04L7.49 2.84L8.69 1.03L10.03 1.30L10.44 3.43L11.29 4.00L13.41 3.56L14.17 4.70L12.96 6.50L13.16 7.49z" fill="#d2d3d8"/><circle cx="8" cy="8" r="2.52" fill="#ebecf0"/></svg><svg class="b" style="left:12px;top:620px;width:26px;height:23px" viewBox="0 0 26 23"><circle cx="10.700" cy="11" r="8.600" fill="none" stroke="#555" stroke-width="1"/><path d="M12 11.500h10" stroke="#111" stroke-width="1.200"/><rect x="8.900" y="9.300" width="3.800" height="3.800" fill="#fff" stroke="#111" stroke-width="1.300"/></svg><svg class="b" style="left:58px;top:621px;width:22px;height:21px" viewBox="0 0 22 21"><defs><linearGradient id="fg" x1="0" x2="1"><stop offset="0" stop-color="#555"/><stop offset="0.5" stop-color="#bbb"/><stop offset="1" stop-color="#555"/></linearGradient></defs><path d="M3.800 3.500q6.200-2.500 12.500 0l-4.800 7.500v6q-1.500 1.500-3 0v-6z" fill="url(#fg)" stroke="#333" stroke-width="0.800"/><path d="M16.500 1.500h3v3M2.500 15v3h3" fill="none" stroke="#222" stroke-width="1.100"/></svg>
<div class="b" style="left:5px;top:651px;width:16px;height:15px;background:#fff;border:1.500px solid #c3cae0;border-radius:1.500px;"></div>
<span class="t" style="left:27.9px;top:652px;font-size:14.9px;line-height:15px;color:#2a2a2a;letter-spacing:-1.038px;">Fin</span>
<div class="b" style="left:5px;top:671px;width:16px;height:15px;background:#fff;border:1.500px solid #c3cae0;border-radius:1.500px;"></div>
<span class="t" style="left:27.9px;top:672px;font-size:14.9px;line-height:15px;color:#2a2a2a;letter-spacing:-0.564px;">Proche</span>
<div class="b" style="left:5px;top:691px;width:16px;height:15px;background:#fff;border:1.500px solid #c3cae0;border-radius:1.500px;"></div>
<span class="t" style="left:27.9px;top:692px;font-size:14.9px;line-height:15px;color:#2a2a2a;letter-spacing:-0.413px;">Point</span>
<div class="b" style="left:5px;top:711px;width:16px;height:15px;background:#fff;border:1.500px solid #c3cae0;border-radius:1.500px;"></div>
<span class="t" style="left:27.9px;top:712px;font-size:14.9px;line-height:15px;color:#2a2a2a;letter-spacing:0.254px;">Mi</span>
<div class="b" style="left:5px;top:731px;width:16px;height:15px;background:#fff;border:1.500px solid #c3cae0;border-radius:1.500px;"></div>
<span class="t" style="left:27.9px;top:732px;font-size:14.9px;line-height:15px;color:#2a2a2a;letter-spacing:-1.291px;">Cen</span>
<div class="b" style="left:5px;top:751px;width:16px;height:15px;background:#fff;border:1.500px solid #c3cae0;border-radius:1.500px;"></div>
<span class="t" style="left:27.9px;top:752px;font-size:14.9px;line-height:15px;color:#2a2a2a;letter-spacing:-0.187px;">Int</span>
<div class="b" style="left:5px;top:771px;width:16px;height:15px;background:#fff;border:1.500px solid #c3cae0;border-radius:1.500px;"></div>
<span class="t" style="left:27.9px;top:772px;font-size:14.9px;line-height:15px;color:#2a2a2a;letter-spacing:-0.962px;">Perp</span>
<div class="b" style="left:5px;top:791px;width:16px;height:15px;background:#fff;border:1.500px solid #c3cae0;border-radius:1.500px;"></div>
<span class="t" style="left:27.9px;top:792px;font-size:14.9px;line-height:15px;color:#2a2a2a;letter-spacing:-1.168px;">Tan</span>
<div class="b" style="left:5px;top:811px;width:16px;height:15px;background:#fff;border:1.500px solid #c3cae0;border-radius:1.500px;"></div>
<span class="t" style="left:27.9px;top:812px;font-size:14.9px;line-height:15px;color:#2a2a2a;letter-spacing:-0.384px;">Quad</span>
<div class="b" style="left:5px;top:831px;width:16px;height:15px;background:#fff;border:1.500px solid #c3cae0;border-radius:1.500px;"></div>
<span class="t" style="left:27.9px;top:832px;font-size:14.9px;line-height:15px;color:#2a2a2a;letter-spacing:-0.083px;">Nœud</span>
<div class="b" style="left:5px;top:851px;width:16px;height:15px;background:#fff;border:1.500px solid #c3cae0;border-radius:1.500px;"></div>
<span class="t" style="left:27.9px;top:852px;font-size:14.9px;line-height:15px;color:#2a2a2a;letter-spacing:-0.067px;">Sommet</span>
<div class="b" style="left:5px;top:871px;width:16px;height:15px;background:#fff;border:1.500px solid #c3cae0;border-radius:1.500px;"></div>
<span class="t" style="left:27.9px;top:872px;font-size:14.9px;line-height:15px;color:#2a2a2a;letter-spacing:-0.142px;">Projeter</span>
<div class="b" style="left:5px;top:912px;width:16px;height:15px;background:#fff;border:1.500px solid #c3cae0;border-radius:1.500px;"></div>
<span class="t" style="left:27.9px;top:913px;font-size:14.9px;line-height:15px;color:#2a2a2a;letter-spacing:-0.239px;">Désactiver</span>
<div class="b" style="left:153px;top:196px;width:229px;height:634px;background:#9ea4ab;border:1px solid #cfd2de;border-right:none;"></div>
<div class="b" style="left:154px;top:197px;width:227px;height:633px;background:#9ea4ab;"></div>
<svg class="b" style="left:154px;top:206.2px;width:227px;height:576.5px;overflow:hidden" viewBox="154 206.2 227 576.5"><defs><pattern id="md" x="281" y="495" width="3.44" height="3.44" patternUnits="userSpaceOnUse"><rect width="3.44" height="3.44" fill="#959ba2"/><rect x="1.22" y="1.22" width="1.1" height="1.1" fill="#a3a9b0"/></pattern><pattern id="Md" x="280.5" y="494.5" width="17.2" height="17.2" patternUnits="userSpaceOnUse"><rect x="0" y="0" width="1" height="17.2" fill="#838990"/><rect x="0" y="0" width="17.2" height="1" fill="#838990"/></pattern></defs><rect x="154" y="206.2" width="227" height="576.5" fill="url(#md)"/><rect x="154" y="206.2" width="227" height="576.5" fill="url(#Md)"/></svg>
<svg class="b" style="left:154px;top:196px;width:227px;height:634px" viewBox="154 196 227 634"><rect x="280" y="206" width="2" height="289" fill="#4d9a3f"/><rect x="281.500" y="494.200" width="100" height="1.600" fill="#a04a4a"/><path d="M202.500 431v139.500h151" stroke="#0a0a0a" stroke-width="1.100" fill="none"/><path d="M192.500 490v140h152" stroke="#050505" stroke-width="2.200" fill="none"/><path d="M198.600 749v37.300h36.400" stroke="#5a5a5a" stroke-width="1" fill="none"/></svg>
<span class="t" style="left:201.0px;top:735px;font-size:16.8px;line-height:17px;color:#5a5a5a;">y</span>
<span class="t" style="left:238.2px;top:774px;font-size:16.8px;line-height:17px;color:#5a5a5a;">x</span>
<div class="b" style="left:154px;top:197px;width:78px;height:22.6px;background:#e2e3e8;border-radius:0 0 2.500px 0;"></div><span class="t" style="left:161.8px;top:200px;font-size:15.3px;line-height:15px;color:#646569;letter-spacing:-1.222px;font-weight:bold;">Dessus</span><div class="b" style="left:218px;top:199.2px;width:1.2px;height:19.6px;background:#66676b;"></div><svg class="b" style="left:219.8px;top:205.2px;width:9px;height:5.200px" viewBox="0 0 9 5.200"><path d="M0 0h9l-4.500 5.200z" fill="#77787c"/></svg>
<div class="b" style="left:386px;top:196px;width:902px;height:634.5px;background:#fff;border:1px solid #d5d8e6;"></div>
<svg class="b" style="left:387px;top:197px;width:900px;height:633px;overflow:hidden" viewBox="387 197 900 633"><defs><linearGradient id="wg" gradientUnits="userSpaceOnUse" x1="504" y1="277" x2="1287" y2="832"><stop offset="0" stop-color="#987859"/><stop offset="0.5" stop-color="#99795b"/><stop offset="1" stop-color="#947557"/></linearGradient><linearGradient id="dg" gradientUnits="userSpaceOnUse" x1="504" y1="277" x2="1207" y2="300"><stop offset="0" stop-color="#4e3d2c"/><stop offset="1" stop-color="#48372a"/></linearGradient><clipPath id="wc"><path d="M504.300 277L1287 405.800V832H538z"/></clipPath><filter id="grain" x="0" y="0" width="100%" height="100%"><feTurbulence type="fractalNoise" baseFrequency="0.9 0.15" numOctaves="2" seed="3"/><feColorMatrix type="matrix" values="0 0 0 0 0  0 0 0 0 0  0 0 0 0 0  0.5 0.5 0 0 -0.42"/></filter></defs><path d="M504.300 277L1206.800 246.300L1197 392L900 345z" fill="url(#dg)"/><clipPath id="dc"><path d="M504.300 277L1206.800 246.300L1197 392L900 345z"/></clipPath><g clip-path="url(#dc)"><path d="M900 290 L1210 262" stroke="#3f3023" stroke-width="0.7" opacity="0.45"/><path d="M900 300 L1210 276" stroke="#3f3023" stroke-width="0.7" opacity="0.45"/><path d="M900 312 L1210 292" stroke="#3f3023" stroke-width="0.7" opacity="0.45"/><path d="M900 326 L1210 308" stroke="#3f3023" stroke-width="0.7" opacity="0.45"/><path d="M900 342 L1210 326" stroke="#3f3023" stroke-width="0.7" opacity="0.45"/><path d="M900 360 L1210 346" stroke="#3f3023" stroke-width="0.7" opacity="0.45"/><path d="M900 378 L1210 368" stroke="#3f3023" stroke-width="0.7" opacity="0.45"/></g><path d="M504.300 277L1287 405.800V832H538z" fill="url(#wg)"/><g clip-path="url(#wc)"><rect x="500" y="270" width="800" height="570" filter="url(#grain)" opacity="0.10"/><path d="M506.3 309.4L1290 477.5" stroke="#4a3424" stroke-width="0.8" opacity="0.52"/><path d="M508.2 340.7L1290 544.9" stroke="#4a3424" stroke-width="0.8" opacity="0.52"/><path d="M510.1 372.6L1290 613.2" stroke="#4a3424" stroke-width="0.8" opacity="0.52"/><path d="M512.0 403.5L1290 679.0" stroke="#4a3424" stroke-width="0.8" opacity="0.52"/><path d="M513.9 435.0L1290 745.7" stroke="#4a3424" stroke-width="0.8" opacity="0.52"/><path d="M515.7 465.0L1290 808.9" stroke="#4a3424" stroke-width="0.8" opacity="0.52"/><path d="M517.5 495.6L1290 873.0" stroke="#4a3424" stroke-width="0.8" opacity="0.52"/><path d="M519.4 526.0L1290 936.3" stroke="#4a3424" stroke-width="0.8" opacity="0.52"/><path d="M521.1 555.0L1290 996.4" stroke="#4a3424" stroke-width="0.8" opacity="0.52"/><path d="M522.9 583.5L1290 1055.1" stroke="#4a3424" stroke-width="0.8" opacity="0.52"/><path d="M524.6 612.0L1290 1113.5" stroke="#4a3424" stroke-width="0.8" opacity="0.52"/><path d="M526.3 640.5L1290 1171.7" stroke="#4a3424" stroke-width="0.8" opacity="0.52"/><path d="M528.0 668.5L1290 1228.5" stroke="#4a3424" stroke-width="0.8" opacity="0.52"/><path d="M529.7 696.3L1290 1284.6" stroke="#4a3424" stroke-width="0.8" opacity="0.52"/><path d="M531.4 723.8L1290 1339.9" stroke="#4a3424" stroke-width="0.8" opacity="0.52"/><path d="M533.0 751.3L1290 1394.9" stroke="#4a3424" stroke-width="0.8" opacity="0.52"/><path d="M534.7 778.8L1290 1449.6" stroke="#4a3424" stroke-width="0.8" opacity="0.52"/><path d="M536.4 806.0L1290 1503.5" stroke="#4a3424" stroke-width="0.8" opacity="0.52"/><path d="M538.0 833.0L1290 1556.7" stroke="#4a3424" stroke-width="0.8" opacity="0.52"/><path d="M539.6 860.0L1290 1609.7" stroke="#4a3424" stroke-width="0.8" opacity="0.52"/><path d="M541.3 887.0L1290 1662.4" stroke="#4a3424" stroke-width="0.8" opacity="0.52"/><path d="M542.9 914.0L1290 1714.9" stroke="#4a3424" stroke-width="0.8" opacity="0.52"/><path d="M544.5 941.0L1290 1767.1" stroke="#4a3424" stroke-width="0.8" opacity="0.52"/><path d="M546.2 968.0L1290 1819.1" stroke="#4a3424" stroke-width="0.8" opacity="0.52"/><path d="M547.8 995.0L1290 1870.8" stroke="#4a3424" stroke-width="0.8" opacity="0.52"/><path d="M549.4 1022.0L1290 1922.3" stroke="#4a3424" stroke-width="0.8" opacity="0.52"/><path d="M551.1 1049.0L1290 1973.6" stroke="#4a3424" stroke-width="0.8" opacity="0.52"/><path d="M552.7 1076.0L1290 2024.6" stroke="#4a3424" stroke-width="0.8" opacity="0.52"/><path d="M554.4 1103.0L1290 2075.4" stroke="#4a3424" stroke-width="0.8" opacity="0.52"/><path d="M614.0 332.5L615.5 368.7" stroke="#4a3424" stroke-width="0.9" opacity="0.65"/><path d="M617.0 405.6L618.5 441.2" stroke="#4a3424" stroke-width="0.9" opacity="0.65"/><path d="M620.0 477.5L621.5 512.0" stroke="#4a3424" stroke-width="0.9" opacity="0.65"/><path d="M623.0 547.1L624.5 582.0" stroke="#4a3424" stroke-width="0.9" opacity="0.65"/><path d="M626.0 615.2L627.5 647.8" stroke="#4a3424" stroke-width="0.9" opacity="0.65"/><path d="M629.0 680.4L630.5 713.0" stroke="#4a3424" stroke-width="0.9" opacity="0.65"/><path d="M632.0 744.9L633.5 776.6" stroke="#4a3424" stroke-width="0.9" opacity="0.65"/><path d="M635.0 808.0L636.5 839.3" stroke="#4a3424" stroke-width="0.9" opacity="0.65"/><path d="M638.0 870.5L639.5 901.5" stroke="#4a3424" stroke-width="0.9" opacity="0.65"/><path d="M641.0 932.1L642.5 962.8" stroke="#4a3424" stroke-width="0.9" opacity="0.65"/><path d="M644.0 993.4L645.5 1024.0" stroke="#4a3424" stroke-width="0.9" opacity="0.65"/><path d="M647.0 1054.5L648.5 1085.1" stroke="#4a3424" stroke-width="0.9" opacity="0.65"/><path d="M650.0 1115.6L651.5 1146.1" stroke="#4a3424" stroke-width="0.9" opacity="0.65"/><path d="M653.0 1176.5L654.5 1207.0" stroke="#4a3424" stroke-width="0.9" opacity="0.65"/></g></svg>
<div class="b" style="left:387px;top:197px;width:126px;height:22.6px;background:#6fa5f8;border-radius:0 0 2.500px 0;"></div><span class="t" style="left:397.0px;top:200px;font-size:15.3px;line-height:15px;color:#26282e;letter-spacing:-0.307px;font-weight:bold;">Déplacement</span><div class="b" style="left:499.2px;top:199.2px;width:1.2px;height:19.6px;background:#2e3038;"></div><svg class="b" style="left:501px;top:205.2px;width:9px;height:5.200px" viewBox="0 0 9 5.200"><path d="M0 0h9l-4.500 5.200z" fill="#26282e"/></svg>
<div class="b" style="left:387px;top:813px;width:900px;height:17px;background:rgba(108,108,108,0.62);"></div>
<span class="t" style="left:439.0px;top:813px;font-size:17.2px;line-height:17px;color:#fff;letter-spacing:-0.072px;">Lancer de rayons (Cycles)</span>
<span class="t" style="left:652.0px;top:813px;font-size:17.2px;line-height:17px;color:#fff;letter-spacing:0.127px;">Terminé</span>
<span class="t" style="left:754.0px;top:813px;font-size:17.2px;line-height:17px;color:#fff;letter-spacing:-0.127px;">00:00:27</span>
<span class="t" style="left:1206.0px;top:813px;font-size:17.2px;line-height:17px;color:#fff;letter-spacing:-0.272px;">1000/1000</span>
<svg class="b" style="left:388px;top:813px;width:46px;height:17px" viewBox="388 813 46 17"><g fill="#fff"><rect x="389" y="814.500" width="3.500" height="14"/><rect x="395.500" y="814.500" width="3.500" height="14"/><path d="M403.500 821.500h13v7h-13z"/><path d="M402.800 822v-5.500q0-2 2.500-2t2.500 2v1.500h-1.300v-1.300q0-.9-1.200-.9t-1.200.9v5.300z"/><path d="M425 814.500l2.100 4.800 5.200.5-3.900 3.500 1.100 5.100-4.500-2.700-4.500 2.700 1.100-5.100-3.900-3.500 5.200-.5z"/></g></svg>
<div class="b" style="left:827px;top:512.5px;width:20px;height:1.2px;background:#fff;"></div><div class="b" style="left:836.5px;top:503px;width:1.2px;height:20px;background:#fff;"></div>
<div class="b" style="left:154px;top:835px;width:564px;height:128px;background:#9ea4ab;"></div>
<svg class="b" style="left:154px;top:835.5px;width:564px;height:127.5px;overflow:hidden" viewBox="154 835.5 564 127.5"><defs><pattern id="mf" width="4" height="4" patternUnits="userSpaceOnUse"><rect width="4" height="4" fill="#979da4"/></pattern><pattern id="Mf" x="436" y="899" width="27.8" height="27.8" patternUnits="userSpaceOnUse"><rect x="0" y="0" width="1" height="27.8" fill="#80868d"/><rect x="0" y="0" width="27.8" height="1" fill="#80868d"/></pattern></defs><rect x="154" y="835.5" width="564" height="127.5" fill="url(#mf)"/><rect x="154" y="835.5" width="564" height="127.5" fill="url(#Mf)"/></svg>
<svg class="b" style="left:154px;top:835px;width:564px;height:128px" viewBox="154 835 564 128"><rect x="435.500" y="835" width="1.800" height="64.500" fill="#4d9a3f"/><rect x="552" y="898.900" width="166" height="1.400" fill="#a04a4a"/><path d="M537 899.600h16" stroke="#111" stroke-width="1.200"/><path d="M293.500 835v64.600h243.500v-64.600" stroke="#050505" stroke-width="2.200" fill="none"/></svg>
<div class="b" style="left:154px;top:836.2px;width:62px;height:22.6px;background:#e2e3e8;border-radius:0 0 2.500px 0;"></div><span class="t" style="left:162.5px;top:839px;font-size:15.3px;line-height:15px;color:#646569;letter-spacing:-1.248px;font-weight:bold;">Face</span><div class="b" style="left:202px;top:838.4px;width:1.2px;height:19.6px;background:#66676b;"></div><svg class="b" style="left:203.8px;top:844.4px;width:9px;height:5.200px" viewBox="0 0 9 5.200"><path d="M0 0h9l-4.500 5.200z" fill="#77787c"/></svg>
<div class="b" style="left:724px;top:835px;width:563px;height:128px;background:#9ea4ab;"></div>
<svg class="b" style="left:724px;top:835.5px;width:563px;height:127.5px;overflow:hidden" viewBox="724 835.5 563 127.5"><defs><pattern id="mr" width="4" height="4" patternUnits="userSpaceOnUse"><rect width="4" height="4" fill="#979da4"/></pattern><pattern id="Mr" x="1006" y="899" width="27.8" height="27.8" patternUnits="userSpaceOnUse"><rect x="0" y="0" width="1" height="27.8" fill="#80868d"/><rect x="0" y="0" width="27.8" height="1" fill="#80868d"/></pattern></defs><rect x="724" y="835.5" width="563" height="127.5" fill="url(#mr)"/><rect x="724" y="835.5" width="563" height="127.5" fill="url(#Mr)"/></svg>
<svg class="b" style="left:724px;top:835px;width:563px;height:128px" viewBox="724 835 563 128"><rect x="1005.500" y="835" width="1.800" height="64.500" fill="#4d9a3f"/><rect x="1107" y="898.900" width="180" height="1.400" fill="#a04a4a"/><path d="M1012 899.600h95" stroke="#111" stroke-width="1.200"/><path d="M788.500 835v64.600h224v-64.600" stroke="#050505" stroke-width="2.200" fill="none"/></svg>
<div class="b" style="left:724px;top:836.2px;width:73.8px;height:22.6px;background:#e2e3e8;border-radius:0 0 2.500px 0;"></div><span class="t" style="left:732.0px;top:839px;font-size:15.3px;line-height:15px;color:#646569;letter-spacing:-0.036px;font-weight:bold;">Droite</span><div class="b" style="left:784.3px;top:838.4px;width:1.2px;height:19.6px;background:#66676b;"></div><svg class="b" style="left:786.1px;top:844.4px;width:9px;height:5.200px" viewBox="0 0 9 5.200"><path d="M0 0h9l-4.500 5.200z" fill="#77787c"/></svg>
<div class="b" style="left:150px;top:965px;width:1140px;height:27px;background:#dcdde2;"></div>
<div class="b" style="left:153px;top:965px;width:114px;height:25.5px;background:#ebecf0;border-radius:0 0 6px 6px;border:1px solid #d3d6e4;border-top:none;"></div>
<span class="t" style="left:166.0px;top:971px;font-size:15.3px;line-height:15px;color:#2a2a2a;letter-spacing:0.042px;">Déplacement</span>
<span class="t" style="left:277.0px;top:971px;font-size:15.3px;line-height:15px;color:#76777b;letter-spacing:-0.852px;">Dessus</span>
<span class="t" style="left:345.0px;top:971px;font-size:15.3px;line-height:15px;color:#76777b;letter-spacing:-1.084px;">Face</span>
<span class="t" style="left:396.0px;top:971px;font-size:15.3px;line-height:15px;color:#76777b;letter-spacing:0.083px;">Droite</span>
<svg class="b" style="left:460px;top:974px;width:12px;height:12px" viewBox="0 0 12 12"><path d="M4.500.5h3v4h4v3h-4v4h-3v-4h-4v-3h4z" fill="none" stroke="#66676b" stroke-width="1"/></svg>
<div class="b" style="left:1291.5px;top:194px;width:626px;height:802px;background:#ebecf0;border-radius:7px 0 0 0;"></div>
<span class="t" style="left:1293.0px;top:198px;font-size:15.5px;line-height:16px;color:#76777b;letter-spacing:-0.359px;">Matériaux</span>
<svg class="b" style="left:1897px;top:197px;width:16px;height:16px" viewBox="0 0 16 16"><path d="M14.97 8.69L14.70 10.03L12.57 10.44L12.00 11.29L12.44 13.41L11.30 14.17L9.50 12.96L8.51 13.16L7.31 14.97L5.97 14.70L5.56 12.57L4.71 12.00L2.59 12.44L1.83 11.30L3.04 9.50L2.84 8.51L1.03 7.31L1.30 5.97L3.43 5.56L4.00 4.71L3.56 2.59L4.70 1.83L6.50 3.04L7.49 2.84L8.69 1.03L10.03 1.30L10.44 3.43L11.29 4.00L13.41 3.56L14.17 4.70L12.96 6.50L13.16 7.49z" fill="#d2d3d8"/><circle cx="8" cy="8" r="2.52" fill="#ebecf0"/></svg>
<svg class="b" style="left:1296px;top:230px;width:20px;height:21px" viewBox="0 0 20 21"><path d="M2 14.500l8-8.500 3.500 3-7.500 9q-2.500 1-4-1z" fill="#f4f4f4" stroke="#222" stroke-width="1.200"/><path d="M10 6l3-4 4.500 3.500-3.500 3.700z" fill="#e33" stroke="#222" stroke-width="0.800"/><path d="M13 2l2-1.500 3 2.500-1 2z" fill="#eee" stroke="#222" stroke-width="0.800"/><path d="M14 11.500v8M10 15.500h8" stroke="#000" stroke-width="2.600"/></svg>
<svg class="b" style="left:1325.5px;top:231px;width:44px;height:16px" viewBox="0 0 44 16"><g fill="none" stroke="#757575" stroke-width="3.400" stroke-linecap="round" stroke-linejoin="round"><path d="M17 8H2.500M8.500 1.800L2.200 8l6.300 6.200"/><path d="M27 8h14.500M35.500 1.800l6.300 6.200-6.300 6.200"/></g></svg>
<div class="b" style="left:1374px;top:226.5px;width:452.5px;height:29px;background:#fff;border:2px solid #b6bed6;border-radius:2px;"></div>
<svg class="b" style="left:1831px;top:229px;width:22px;height:22px" viewBox="0 0 22 22"><circle cx="8.800" cy="8.800" r="6.800" fill="none" stroke="#111" stroke-width="1.500"/><path d="M13.800 13.800l5.500 5" stroke="#111" stroke-width="1.900" stroke-linecap="round"/></svg>
<svg class="b" style="left:1862.5px;top:231px;width:15px;height:16px" viewBox="0 0 15 16"><g stroke="#111" stroke-width="2.300" stroke-linecap="round"><path d="M1.200 1.500h12.6 M1.200 8h12.6 M1.200 14.500h12.6"/></g></svg>
<svg class="b" style="left:1889.5px;top:230.2px;width:17px;height:17px" viewBox="0 0 17 17"><defs><radialGradient id="hg190038" cx="0.4" cy="0.3" r="0.8"><stop offset="0" stop-color="#5d82ea"/><stop offset="0.6" stop-color="#2647b8"/><stop offset="1" stop-color="#142a86"/></radialGradient></defs><circle cx="8.5" cy="8.5" r="8.5" fill="url(#hg190038)"/></svg><span class="t" style="left:1889.5px;top:230.7px;width:17px;text-align:center;font-family:'Liberation Serif',serif;font-weight:bold;font-size:16.15px;line-height:17px;color:#fff">?</span>
<div class="b" style="left:1293px;top:266px;width:117px;height:90px;background:#fff;"></div>
<div class="b" style="left:1293px;top:266px;width:65.5px;height:90px;background:#fff;border:1px solid #6fb0f5;"></div>
<svg class="b" style="left:1294px;top:267px;width:63px;height:67px" viewBox="0 0 63 67"><defs><linearGradient id="tb1294" x1="0" y1="0" x2="0" y2="1"><stop offset="0" stop-color="#a8a8a8"/><stop offset="0.55" stop-color="#c2c2c2"/><stop offset="1" stop-color="#dedede"/></linearGradient><radialGradient id="ts1294" cx="0.42" cy="0.35" r="0.75"><stop offset="0" stop-color="#a88058"/><stop offset="0.7" stop-color="#8f6842"/><stop offset="1" stop-color="#6c4c2e"/></radialGradient><radialGradient id="tq1294" cx="0.35" cy="0.3" r="0.8"><stop offset="0" stop-color="#f4f7ff"/><stop offset="0.5" stop-color="#9fb4f5"/><stop offset="1" stop-color="#4c63d8"/></radialGradient></defs><rect width="63" height="67" fill="url(#tb1294)"/><path d="M0 10L25 30M63 12L40 30M0 45L63 38" stroke="#a8a8a8" stroke-width="0.800" opacity="0.7"/><path d="M13 48q-3 12 0 19h14q2-8 6-14z" fill="#7e5a38"/><ellipse cx="32" cy="31.500" rx="26.500" ry="28" fill="url(#ts1294)"/><ellipse cx="41.500" cy="25" rx="9.500" ry="12" fill="#dcdcdc" transform="rotate(-12 41.500 25)"/><ellipse cx="41.500" cy="25" rx="6.500" ry="8.500" fill="#1d1d1d" transform="rotate(-12 41.500 25)"/><path d="M38 23q3-2 5 1t3 1" stroke="#ddd" stroke-width="1.300" fill="none"/><circle cx="52" cy="57" r="8" fill="url(#tq1294)" stroke="#222" stroke-width="1.200"/></svg>
<div class="b" style="left:1294px;top:334px;width:63.5px;height:1px;background:#777;"></div>
<span class="t" style="left:1296.0px;top:336px;font-size:15.5px;line-height:16px;color:#222;letter-spacing:-0.281px;">Vertigo...</span>
<div class="b" style="left:1565px;top:286.5px;width:350px;height:1px;background:#e1e4ec;"></div><div class="b" style="left:1588px;top:316.5px;width:327px;height:1px;background:#e1e4ec;"></div>
<svg class="b" style="left:1422.25px;top:282.5px;width:6.5px;height:10px" viewBox="0 0 6.5 10"><path d="M.8 .8L5.5 5L.8 9.2" fill="none" stroke="#777" stroke-width="1.6"/></svg>
<span class="t" style="left:1437.0px;top:279px;font-size:18.0px;line-height:18px;color:#2a2a2a;letter-spacing:-0.221px;">Name and Type</span>
<svg class="b" style="left:1420.1px;top:314.805px;width:9.8px;height:6.39px" viewBox="0 0 9.8 6.39"><path d="M.8 .8L4.9 5.39L9 .8" fill="none" stroke="#222" stroke-width="1.9"/></svg>
<span class="t" style="left:1437.0px;top:309px;font-size:18.0px;line-height:18px;color:#2a2a2a;letter-spacing:-0.067px;">Matériau physique</span>
<span class="t" style="left:1440.0px;top:347px;font-size:15.0px;line-height:15px;color:#333;letter-spacing:-0.219px;">Couleur de base :</span>
<div class="b" style="left:1563px;top:338px;width:308px;height:32px;background:#fbfbfc;border:1px solid #c3cbe6;border-radius:2px;"></div>
<div class="b" style="left:1853px;top:338.5px;width:1px;height:31px;background:#c3cbe6;"></div><div class="b" style="left:1854px;top:339px;width:16.5px;height:30px;background:#ebecf0;"></div>
<svg class="b" style="left:1857px;top:351.025px;width:9px;height:5.95px" viewBox="0 0 9 5.95"><path d="M.8 .8L4.5 4.95L8.2 .8" fill="none" stroke="#333" stroke-width="1.4"/></svg>
<svg class="b" style="left:1565.5px;top:340.8px;width:13.5px;height:13.5px" viewBox="0 0 13.5 13.5"><rect width="13.5" height="13.5" rx="0.800" fill="#050505"/><rect x="5.105" y="1.415" width="3.29" height="3.29" fill="#f4f4f4"/><rect x="1.415" y="5.105" width="3.29" height="3.29" fill="#ededed"/><rect x="8.795" y="5.105" width="3.29" height="3.29" fill="#dcdcdc"/><rect x="5.105" y="8.795" width="3.29" height="3.29" fill="#d4d4d4"/></svg>
<div class="b" style="left:1878.5px;top:338px;width:40px;height:32px;background:#ebecf0;border:1px solid #c3cbe6;border-radius:5px;"></div><svg class="b" style="left:1888px;top:343.5px;width:21px;height:21px" viewBox="0 0 21 21"><defs><linearGradient id="hb1878" x1="0" x2="1"><stop offset="0" stop-color="#bbb"/><stop offset="1" stop-color="#fff"/></linearGradient></defs><circle cx="10.500" cy="10.500" r="9.500" fill="#0a0a0a" stroke="#111" stroke-width="1.200"/><path d="M10.500 1a9.500 9.500 0 0 0 0 19z" fill="url(#hb1878)"/><path d="M10.500 0v21" stroke="#111" stroke-width="1.100"/><path d="M12 6.500q4 4 0 8" stroke="#fff" stroke-width="1.300" fill="none"/></svg>
<span class="t" style="left:1796.0px;top:380px;font-size:15.5px;line-height:16px;color:#333;letter-spacing:-0.387px;">acité</span>
<div class="b" style="left:1700px;top:398.5px;width:214.5px;height:21.5px;background:#818181;border:1px solid #c3cbe6;border-radius:3px;"></div>
<div class="b" style="left:1869.5px;top:398.5px;width:45px;height:21.5px;background:#fff;border:1.300px solid #333;border-radius:4px;"></div>
<span class="t" style="left:1874.5px;top:402px;font-size:15.5px;line-height:16px;color:#777;letter-spacing:-1.184px;">100%</span>
<div class="b" style="left:1600px;top:431px;width:278px;height:30px;background:#ebecf0;border:1px solid #c3cbe6;"></div>
<svg class="b" style="left:1861px;top:440px;width:14px;height:11px" viewBox="0 0 14 11"><path d="M0.500 0.500h13l-6.500 10z" fill="#333"/></svg>
<div class="b" style="left:1885px;top:431px;width:31px;height:30px;background:#ebecf0;border:1px solid #c3cbe6;"></div>
<svg class="b" style="left:1885px;top:430px;width:31px;height:30px" viewBox="0 0 31 30"><path d="M12 8q2-7 9-5.500t3 11" fill="none" stroke="#2e9a34" stroke-width="1.500"/><path d="M8 13q8-9 19-9" fill="none" stroke="#d9251d" stroke-width="1.500"/><path d="M9 9q4 8 15 9" fill="none" stroke="#5a7ad8" stroke-width="1.200"/><circle cx="26.500" cy="4.500" r="2.300" fill="#d9151d"/><circle cx="8.500" cy="8" r="2.300" fill="#2b49c3"/><path d="M3 26.500V13q0-1 1-1h5.500l2 2.500h9.500q1 0 1 1v2" fill="#f3cf62" stroke="#2b2414" stroke-width="1.400"/><circle cx="17" cy="12.500" r="3.200" fill="#f0c020" stroke="#7a5a10" stroke-width="0.600"/><circle cx="16" cy="11.500" r="1" fill="#fff8c0"/><path d="M3 27L7.500 16.500H27.500L23 27z" fill="#f8d35a" stroke="#2b2414" stroke-width="1.500" stroke-linejoin="round"/><path d="M8.300 17.800h17.500l-1.200 2.800H7.200z" fill="#fdeaa5" opacity="0.85"/><path d="M19 23.500l3-2.500M19 23.500l3.500 1.500" stroke="#6ab04c" stroke-width="1" fill="none"/></svg>
<span class="t" style="left:1795.0px;top:475px;font-size:18.0px;line-height:18px;color:#2a2a2a;letter-spacing:-0.008px;">té</span>
<div class="b" style="left:1815px;top:483.5px;width:80px;height:1px;background:#e1e4ec;"></div>
<svg class="b" style="left:1901.5px;top:476.5px;width:13px;height:13px" viewBox="0 0 13 13"><path d="M1 1L12 12M12 1L1 12" stroke="#1a1a1a" stroke-width="1.6"/></svg>
<svg class="b" style="left:1788px;top:508px;width:24px;height:24px" viewBox="0 0 24 24"><g stroke-linecap="butt"><path d="M2.200 2.200L21.800 21.800M21.800 2.200L2.200 21.800" stroke="#8c0a0a" stroke-width="4.700"/><path d="M2.500 2.500L21.500 21.500M21.500 2.500L2.500 21.500" stroke="#dd0303" stroke-width="3.300"/></g></svg>
<svg class="b" style="left:1820px;top:508px;width:18px;height:24px" viewBox="0 0 18 24"><defs><radialGradient id="bg1829520" cx="0.38" cy="0.32" r="0.75"><stop offset="0" stop-color="#fffbe4"/><stop offset="0.45" stop-color="#fbe48a"/><stop offset="1" stop-color="#e8b040"/></radialGradient></defs><path d="M9 0.700C4 0.700 .8 4.200 .8 8.400c0 3 1.700 4.800 3 6.800 .8 1.300 1.200 2.500 1.300 3.800h7.800c.1-1.300 .5-2.500 1.300-3.800 1.300-2 3-3.800 3-6.800C17.200 4.200 14 .7 9 .7z" fill="url(#bg1829520)" stroke="#6a6248" stroke-width="1.100"/><path d="M5.600 19h6.800v2.300c0 1.300-1.200 2.100-3.400 2.100s-3.400-.8-3.400-2.100z" fill="#b0b0b0" stroke="#333" stroke-width="1"/><path d="M5.800 20.600h6.400" stroke="#444" stroke-width="0.9"/></svg>
<div class="b" style="left:1849px;top:508.5px;width:64px;height:23px;background:#fff;border:1px solid #c3cbe6;border-radius:4px;"></div><div class="b" style="left:1850px;top:509.5px;width:62px;height:21px;background:#818181;border-radius:3px;"></div><span class="t" style="left:1862.4px;top:513px;font-size:15.5px;line-height:16px;color:#fff;letter-spacing:-0.680px;">100%</span>
<svg class="b" style="left:1784px;top:544.5px;width:25px;height:25px" viewBox="0 0 25 25"><rect x="0" y="0" width="20" height="20" fill="#0a0a0a"/><rect x="8" y="2" width="5.500" height="5.500" fill="#fff"/><rect x="2.500" y="7.500" width="5.500" height="5.500" fill="#e4e4e4"/><rect x="13.500" y="7.500" width="5" height="5.500" fill="#ddd"/><rect x="8" y="13" width="5.500" height="5" fill="#ccc"/><circle cx="19.500" cy="20" r="4.600" fill="#111"/><path d="M19.500 16.800v6.400M16.300 20h6.400" stroke="#fff" stroke-width="1.900"/></svg>
<svg class="b" style="left:1812px;top:549px;width:25px;height:18px" viewBox="0 0 25 18"><defs><linearGradient id="fd181749" x1="0" y1="0" x2="0" y2="1"><stop offset="0" stop-color="#fde9a0"/><stop offset="0.35" stop-color="#f9d25a"/><stop offset="1" stop-color="#efac28"/></linearGradient></defs><path d="M1.500 16.500V3.500q0-1 1-1h5.500l2 2.500h8.500q1 0 1 1v2" fill="#f3c44e" stroke="#2a2412" stroke-width="1.300"/><path d="M1.500 16.800L5.200 7.800h19l-4 9z" fill="url(#fd181749)" stroke="#1e1a0c" stroke-width="1.400" stroke-linejoin="round"/></svg>
<div class="b" style="left:1849px;top:546px;width:64px;height:23px;background:#dadada;border:1px solid #dedfe6;border-radius:4px;"></div><span class="t" style="left:1862.4px;top:550px;font-size:15.5px;line-height:16px;color:#f5f5f5;letter-spacing:-0.680px;">100%</span>
<svg class="b" style="left:1782.5px;top:580px;width:24px;height:24px" viewBox="0 0 24 24"><g stroke-linecap="butt"><path d="M2.200 2.200L21.800 21.800M21.800 2.200L2.200 21.800" stroke="#8c0a0a" stroke-width="4.700"/><path d="M2.500 2.500L21.500 21.500M21.500 2.500L2.500 21.500" stroke="#dd0303" stroke-width="3.300"/></g></svg>
<svg class="b" style="left:1815px;top:580px;width:18px;height:24px" viewBox="0 0 18 24"><defs><radialGradient id="bg1824592" cx="0.38" cy="0.32" r="0.75"><stop offset="0" stop-color="#fffbe4"/><stop offset="0.45" stop-color="#fbe48a"/><stop offset="1" stop-color="#e8b040"/></radialGradient></defs><path d="M9 0.700C4 0.700 .8 4.200 .8 8.400c0 3 1.700 4.800 3 6.800 .8 1.300 1.200 2.500 1.300 3.800h7.800c.1-1.300 .5-2.500 1.300-3.800 1.300-2 3-3.800 3-6.800C17.200 4.200 14 .7 9 .7z" fill="url(#bg1824592)" stroke="#6a6248" stroke-width="1.100"/><path d="M5.600 19h6.800v2.300c0 1.300-1.200 2.100-3.400 2.100s-3.400-.8-3.400-2.100z" fill="#b0b0b0" stroke="#333" stroke-width="1"/><path d="M5.800 20.600h6.400" stroke="#444" stroke-width="0.9"/></svg>
<div class="b" style="left:1849px;top:580px;width:64px;height:23px;background:#fff;border:1px solid #c3cbe6;border-radius:4px;"></div><div class="b" style="left:1850px;top:581px;width:62px;height:21px;background:#818181;border-radius:3px;"></div><span class="t" style="left:1862.4px;top:584px;font-size:15.5px;line-height:16px;color:#fff;letter-spacing:-0.680px;">100%</span>
<svg class="b" style="left:1901.5px;top:630px;width:13px;height:13px" viewBox="0 0 13 13"><path d="M1 1L12 12M12 1L1 12" stroke="#1a1a1a" stroke-width="1.6"/></svg>
<div class="b" style="left:1800px;top:637.5px;width:95px;height:1px;background:#e1e4ec;"></div>
<svg class="b" style="left:1782.5px;top:660px;width:24px;height:24px" viewBox="0 0 24 24"><g stroke-linecap="butt"><path d="M2.200 2.200L21.800 21.800M21.800 2.200L2.200 21.800" stroke="#8c0a0a" stroke-width="4.700"/><path d="M2.500 2.500L21.500 21.500M21.500 2.500L2.500 21.500" stroke="#dd0303" stroke-width="3.300"/></g></svg>
<svg class="b" style="left:1815px;top:660px;width:18px;height:24px" viewBox="0 0 18 24"><defs><radialGradient id="bg1824672" cx="0.38" cy="0.32" r="0.75"><stop offset="0" stop-color="#fffbe4"/><stop offset="0.45" stop-color="#fbe48a"/><stop offset="1" stop-color="#e8b040"/></radialGradient></defs><path d="M9 0.700C4 0.700 .8 4.200 .8 8.400c0 3 1.700 4.800 3 6.800 .8 1.300 1.200 2.500 1.300 3.800h7.800c.1-1.300 .5-2.500 1.300-3.800 1.300-2 3-3.800 3-6.800C17.200 4.200 14 .7 9 .7z" fill="url(#bg1824672)" stroke="#6a6248" stroke-width="1.100"/><path d="M5.600 19h6.800v2.300c0 1.300-1.200 2.100-3.400 2.100s-3.400-.8-3.400-2.100z" fill="#b0b0b0" stroke="#333" stroke-width="1"/><path d="M5.800 20.600h6.400" stroke="#444" stroke-width="0.9"/></svg>
<div class="b" style="left:1849px;top:660px;width:64px;height:23px;background:#fff;border:1px solid #c3cbe6;border-radius:4px;"></div><div class="b" style="left:1850px;top:661px;width:40.3px;height:21px;background:#818181;border-radius:3px 0 0 3px;"></div><span class="t" style="left:1866.4px;top:664px;font-size:15.5px;line-height:16px;color:#444;letter-spacing:-0.745px;">30%</span><div class="b" style="left:1850px;top:660px;width:40.3px;height:23px;overflow:hidden"><span class="t" style="left:16.4px;top:4px;font-size:15.5px;line-height:16px;color:#fff;letter-spacing:-0.745px;">30%</span></div>
<svg class="b" style="left:1782.5px;top:694px;width:24px;height:24px" viewBox="0 0 24 24"><g stroke-linecap="butt"><path d="M2.200 2.200L21.800 21.800M21.800 2.200L2.200 21.800" stroke="#8c0a0a" stroke-width="4.700"/><path d="M2.500 2.500L21.500 21.500M21.500 2.500L2.500 21.500" stroke="#dd0303" stroke-width="3.300"/></g></svg>
<svg class="b" style="left:1815px;top:694px;width:18px;height:24px" viewBox="0 0 18 24"><defs><radialGradient id="bg1824706" cx="0.38" cy="0.32" r="0.75"><stop offset="0" stop-color="#fffbe4"/><stop offset="0.45" stop-color="#fbe48a"/><stop offset="1" stop-color="#e8b040"/></radialGradient></defs><path d="M9 0.700C4 0.700 .8 4.200 .8 8.400c0 3 1.700 4.800 3 6.800 .8 1.300 1.200 2.500 1.300 3.800h7.800c.1-1.300 .5-2.500 1.300-3.800 1.300-2 3-3.800 3-6.800C17.200 4.200 14 .7 9 .7z" fill="url(#bg1824706)" stroke="#6a6248" stroke-width="1.100"/><path d="M5.600 19h6.800v2.300c0 1.300-1.200 2.100-3.400 2.100s-3.400-.8-3.400-2.100z" fill="#b0b0b0" stroke="#333" stroke-width="1"/><path d="M5.800 20.600h6.400" stroke="#444" stroke-width="0.9"/></svg>
<div class="b" style="left:1843.5px;top:693.5px;width:75px;height:23.5px;background:#fff;border:1px solid #c3cbe6;border-radius:3px;"></div>
<span class="t" style="left:1848.0px;top:698px;font-size:15.5px;line-height:16px;color:#222;letter-spacing:-0.620px;">0.0100</span>
<svg class="b" style="left:1901.5px;top:744px;width:13px;height:13px" viewBox="0 0 13 13"><path d="M1 1L12 12M12 1L1 12" stroke="#1a1a1a" stroke-width="1.6"/></svg>
<div class="b" style="left:1800px;top:751.5px;width:95px;height:1px;background:#e1e4ec;"></div>
<svg class="b" style="left:1782.5px;top:774px;width:24px;height:24px" viewBox="0 0 24 24"><g stroke-linecap="butt"><path d="M2.200 2.200L21.800 21.800M21.800 2.200L2.200 21.800" stroke="#8c0a0a" stroke-width="4.700"/><path d="M2.500 2.500L21.500 21.500M21.500 2.500L2.500 21.500" stroke="#dd0303" stroke-width="3.300"/></g></svg>
<svg class="b" style="left:1815px;top:774px;width:18px;height:24px" viewBox="0 0 18 24"><defs><radialGradient id="bg1824786" cx="0.38" cy="0.32" r="0.75"><stop offset="0" stop-color="#fffbe4"/><stop offset="0.45" stop-color="#fbe48a"/><stop offset="1" stop-color="#e8b040"/></radialGradient></defs><path d="M9 0.700C4 0.700 .8 4.200 .8 8.400c0 3 1.700 4.800 3 6.800 .8 1.300 1.200 2.500 1.300 3.800h7.800c.1-1.300 .5-2.500 1.300-3.800 1.300-2 3-3.800 3-6.800C17.200 4.200 14 .7 9 .7z" fill="url(#bg1824786)" stroke="#6a6248" stroke-width="1.100"/><path d="M5.600 19h6.800v2.300c0 1.300-1.200 2.100-3.400 2.100s-3.400-.8-3.400-2.100z" fill="#b0b0b0" stroke="#333" stroke-width="1"/><path d="M5.800 20.600h6.400" stroke="#444" stroke-width="0.9"/></svg>
<div class="b" style="left:1849px;top:774px;width:64px;height:23px;background:#fff;border:1px solid #c3cbe6;border-radius:4px;"></div><div class="b" style="left:1850px;top:775px;width:62px;height:21px;background:#818181;border-radius:3px;"></div><span class="t" style="left:1862.4px;top:778px;font-size:15.5px;line-height:16px;color:#fff;letter-spacing:-0.680px;">100%</span>
<div class="b" style="left:2px;top:992.5px;width:1915px;height:15px;background:#ebecf0;"></div>
<div class="b" style="left:1167px;top:993.5px;width:108.5px;height:14px;background:#d9def5;"></div><div class="b" style="left:1280px;top:993.5px;width:156px;height:14px;background:#d9def5;"></div>
<div class="b" style="left:9px;top:997px;width:17px;height:14px;border:2px solid #4a4a4a;border-left-width:6px;border-radius:1px;"></div>
<span class="t" style="left:85.0px;top:998px;font-size:14.9px;line-height:15px;color:#3a3a3a;letter-spacing:-1.016px;">PlanC</span>
<span class="t" style="left:207.0px;top:998px;font-size:14.9px;line-height:15px;color:#3a3a3a;letter-spacing:0.061px;">x -19'5"</span>
<span class="t" style="left:298.0px;top:998px;font-size:14.9px;line-height:15px;color:#3a3a3a;letter-spacing:0.127px;">y 19'10-1/2"</span>
<span class="t" style="left:436.0px;top:998px;font-size:14.9px;line-height:15px;color:#3a3a3a;letter-spacing:-0.350px;">z 0</span>
<span class="t" style="left:537.0px;top:998px;font-size:14.9px;line-height:15px;color:#3a3a3a;letter-spacing:-0.853px;">Pouces</span>
<span class="t" style="left:655.0px;top:998px;font-size:14.9px;line-height:15px;color:#3a3a3a;letter-spacing:-0.163px;">Défaut</span>
<span class="t" style="left:879.0px;top:998px;font-size:14.9px;line-height:15px;color:#3a3a3a;letter-spacing:0.081px;">Magnétisme de la grille</span>
<span class="t" style="left:1062.0px;top:998px;font-size:14.9px;line-height:15px;color:#3a3a3a;letter-spacing:0.386px;">Ortho</span>
<span class="t" style="left:1125.0px;top:998px;font-size:14.9px;line-height:15px;color:#3a3a3a;letter-spacing:-0.519px;">Plan</span>
<span class="t" style="left:1455.0px;top:998px;font-size:14.9px;line-height:15px;color:#3a3a3a;letter-spacing:-0.167px;">Manipulateur (PlanC)</span>
<span class="t" style="left:1645.0px;top:998px;font-size:14.9px;line-height:15px;color:#3a3a3a;letter-spacing:-0.098px;">PlanC Auto (Objet)</span>
<span class="t" style="left:1800.0px;top:998px;font-size:14.9px;line-height:15px;color:#3a3a3a;letter-spacing:-0.168px;">Enregistrer l'h</span>
<span class="t" style="left:1178.5px;top:998px;font-size:14.9px;line-height:15px;color:#222;letter-spacing:-0.673px;font-weight:bold;">Accrochages</span>
<span class="t" style="left:1288.5px;top:998px;font-size:14.9px;line-height:15px;color:#222;letter-spacing:0.040px;font-weight:bold;">RepérageIntelligent</span>
<div class="b" style="left:627px;top:995px;width:19.5px;height:13px;background:#000;"></div>
<svg class="b" style="left:1618px;top:995px;width:14px;height:12px" viewBox="0 0 14 12"><path d="M3.500 12V5.500a3.500 4 0 0 1 7 0V12" fill="none" stroke="#8a8a8a" stroke-width="1.300"/><rect x="1" y="8.500" width="12" height="5" fill="none" stroke="#8a8a8a" stroke-width="1.200"/></svg>
<div class="b" style="left:1893px;top:997px;width:17.5px;height:14px;border:2px solid #4a4a4a;border-right-width:6px;border-radius:1px;"></div>
<div class="b" style="left:1293px;top:352px;width:501.5px;height:643.5px;background:#ebecf0;border-radius:9px;border:1px solid #c0c9e6;box-shadow:0 2px 13px rgba(0,0,0,0.36),0 0 2px rgba(0,0,0,0.2);"></div>
<div class="b" style="left:1294px;top:353px;width:499.5px;height:35px;background:#dcdde2;border-radius:8px 8px 0 0;"></div>
<svg class="b" style="left:1301px;top:359px;width:21px;height:21px" viewBox="0 0 21 21"><rect width="21" height="21" fill="#050505"/><path d="M3.200 1.500l2.300-.5 1.800 6.500-2.500 2z" fill="#f4f4f4"/><path d="M1 12.500l4-2.500 3.500-3.500 3 1.500 2.500 3 5.500 2.500-1.500 3-3.500 1.500-1.500 2.500-3-1-1.500-3.500-4 0z" fill="#f6f6f6"/><path d="M5.500 11l3 2.500 4.500 1-3.500-3.500z" fill="#8a8a8a"/><path d="M3.500 14.500l4-1 1.500 2.500z" fill="#b5b5b5"/><path d="M12 16l2 .5-1 2z" fill="#999"/><path d="M16.200 2.200h3.200v7.300h-3.200zM17.300 3.300h1v1.800h-1zM17.300 6.200h1v2.200h-1z" fill="#fff" fill-rule="evenodd"/></svg>
<span class="t" style="left:1328.0px;top:363px;font-size:15.5px;line-height:16px;color:#7a7a7a;letter-spacing:-0.253px;">Édition Vertigo-5010-Teak-001-Occlusion</span>
<svg class="b" style="left:1640px;top:360px;width:135px;height:20px" viewBox="0 0 135 20"><g stroke="#6e6e6e" stroke-width="1.200" fill="none"><path d="M1 10h12"/><rect x="59.500" y="4.500" width="11" height="11" rx="1.500"/><path d="M118.200 4.200l11.800 11.800m0-11.800l-11.800 11.800"/></g></svg>
<svg class="b" style="left:1298px;top:396.02px;width:46.64px;height:16.96px" viewBox="0 0 44 16"><g fill="none" stroke="#707070" stroke-width="3.400" stroke-linecap="round" stroke-linejoin="round"><path d="M17 8H2.500M8.500 1.800L2.200 8l6.300 6.200"/><path d="M27 8h14.500M35.500 1.800l6.300 6.200-6.300 6.200"/></g></svg>
<div class="b" style="left:1345px;top:391px;width:388.5px;height:32px;background:#fff;border:1px solid #c3cbe6;border-radius:2px;"></div>
<svg class="b" style="left:1349px;top:396.5px;width:20px;height:20px" viewBox="0 0 20 20"><ellipse cx="10" cy="10.500" rx="9" ry="3.800" fill="none" stroke="#c89070" stroke-width="1" transform="rotate(-38 10 10.500)"/><ellipse cx="10" cy="10.500" rx="9" ry="3.800" fill="none" stroke="#8ab0e0" stroke-width="1" transform="rotate(30 10 10.500)"/><ellipse cx="10" cy="10.500" rx="8.500" ry="3.500" fill="none" stroke="#70b070" stroke-width="1" transform="rotate(80 10 10.500)"/><circle cx="9.500" cy="10" r="2.800" fill="#e8a41f" stroke="#8a5a14" stroke-width="0.700"/><circle cx="16.500" cy="3.800" r="2.200" fill="#d9151d"/><circle cx="2.800" cy="5" r="1.900" fill="#2b49c3"/><circle cx="12" cy="17.500" r="2" fill="#1a9a2c"/></svg>
<span class="t" style="left:1372.0px;top:401px;font-size:15.5px;line-height:16px;color:#2b2b2b;letter-spacing:-0.264px;">Vertigo-5010-Teak-001-Occlusion</span>
<svg class="b" style="left:1604px;top:402px;width:7px;height:11px" viewBox="0 0 7 11"><path d="M0 0l6.500 5.500L0 11z" fill="#111"/></svg>
<svg class="b" style="left:1738.5px;top:399px;width:15px;height:16px" viewBox="0 0 15 16"><g stroke="#111" stroke-width="2.300" stroke-linecap="round"><path d="M1.200 1.500h12.6 M1.200 8h12.6 M1.200 14.500h12.6"/></g></svg>
<svg class="b" style="left:1762px;top:394px;width:26px;height:26px" viewBox="0 0 26 26"><defs><radialGradient id="hg177907" cx="0.4" cy="0.3" r="0.8"><stop offset="0" stop-color="#5d82ea"/><stop offset="0.6" stop-color="#2647b8"/><stop offset="1" stop-color="#142a86"/></radialGradient></defs><circle cx="13" cy="13" r="13" fill="url(#hg177907)"/></svg><span class="t" style="left:1762px;top:394.5px;width:26px;text-align:center;font-family:'Liberation Serif',serif;font-weight:bold;font-size:24.7px;line-height:26px;color:#fff">?</span>
<div class="b" style="left:1480px;top:427px;width:127px;height:127px;background:#3a3a3a;"></div>
<svg class="b" style="left:1481px;top:428px;width:125px;height:125px" viewBox="0 0 125 125"><defs><linearGradient id="tb1481" x1="0" y1="0" x2="0" y2="1"><stop offset="0" stop-color="#bdbdbd"/><stop offset="1" stop-color="#cfcfcf"/></linearGradient><radialGradient id="ts1481" cx="0.42" cy="0.38" r="0.72"><stop offset="0" stop-color="#856443"/><stop offset="0.7" stop-color="#76553a"/><stop offset="1" stop-color="#5c3f27"/></radialGradient><radialGradient id="tq1481" cx="0.35" cy="0.3" r="0.8"><stop offset="0" stop-color="#f4f7ff"/><stop offset="0.5" stop-color="#a9bbf7"/><stop offset="1" stop-color="#5a70dc"/></radialGradient><filter id="tf1481" x="-20%" y="-50%" width="140%" height="200%"><feGaussianBlur stdDeviation="2.200"/></filter><filter id="tz1481" x="-5%" y="-5%" width="110%" height="110%"><feTurbulence type="fractalNoise" baseFrequency="0.8" numOctaves="1" seed="2" result="n"/><feDisplacementMap in="SourceGraphic" in2="n" scale="2.500"/></filter><clipPath id="tc1481"><rect width="125" height="125"/></clipPath></defs><g clip-path="url(#tc1481)"><rect width="125" height="57" fill="#29292b"/><rect y="56" width="125" height="69" fill="url(#tb1481)"/><path d="M0 100L38 78M125 95L100 72M0 112L60 96" stroke="#aeb0b2" stroke-width="0.900"/><rect x="29" y="-6" width="110" height="26" fill="#fff" filter="url(#tf1481)"/><g filter="url(#tz1481)"><path d="M15 126q3-14 20-22l50 0q22 6 26 22z" fill="#6b4b30"/><path d="M40 104q22 8 45 0v-12h-45z" fill="#664629"/><circle cx="62" cy="54" r="47.500" fill="url(#ts1481)"/></g><path d="M45 108q20 6 40 0" stroke="#4a3120" stroke-width="1.200" fill="none"/><circle cx="113" cy="113" r="7.800" fill="url(#tq1481)" stroke="#2a2a2a" stroke-width="1.200"/></g></svg>
<div class="b" style="left:1775.5px;top:570px;width:9px;height:302px;background:#bebfc3;border-radius:4.500px;"></div>
<svg class="b" style="left:1302.25px;top:578px;width:6.5px;height:10px" viewBox="0 0 6.5 10"><path d="M.8 .8L5.5 5L.8 9.2" fill="none" stroke="#777" stroke-width="1.6"/></svg>
<span class="t" style="left:1317.0px;top:574px;font-size:18.0px;line-height:18px;color:#2a2a2a;letter-spacing:-0.221px;">Name and Type</span>
<div class="b" style="left:1446px;top:582.5px;width:324px;height:1px;background:#e1e4ec;"></div>
<svg class="b" style="left:1300.1px;top:610.305px;width:9.8px;height:6.39px" viewBox="0 0 9.8 6.39"><path d="M.8 .8L4.9 5.39L9 .8" fill="none" stroke="#222" stroke-width="1.9"/></svg>
<span class="t" style="left:1317.0px;top:604px;font-size:18.0px;line-height:18px;color:#2a2a2a;letter-spacing:-0.067px;">Matériau physique</span>
<div class="b" style="left:1468px;top:612.5px;width:302px;height:1px;background:#e1e4ec;"></div>
<span class="t" style="left:1320.0px;top:642px;font-size:15.0px;line-height:15px;color:#333;letter-spacing:-0.219px;">Couleur de base :</span>
<div class="b" style="left:1442px;top:633px;width:278.5px;height:32px;background:#fbfbfc;border:1px solid #c3cbe6;border-radius:2px;"></div>
<div class="b" style="left:1702px;top:633.5px;width:1px;height:31px;background:#c3cbe6;"></div><div class="b" style="left:1703px;top:634px;width:16.5px;height:30px;background:#ebecf0;"></div>
<svg class="b" style="left:1706.75px;top:646.663px;width:8.5px;height:5.675px" viewBox="0 0 8.5 5.675"><path d="M.8 .8L4.25 4.675L7.7 .8" fill="none" stroke="#333" stroke-width="1.3"/></svg>
<svg class="b" style="left:1445.2px;top:636.2px;width:13.5px;height:13.5px" viewBox="0 0 13.5 13.5"><rect width="13.5" height="13.5" rx="0.800" fill="#050505"/><rect x="5.105" y="1.415" width="3.29" height="3.29" fill="#f4f4f4"/><rect x="1.415" y="5.105" width="3.29" height="3.29" fill="#ededed"/><rect x="8.795" y="5.105" width="3.29" height="3.29" fill="#dcdcdc"/><rect x="5.105" y="8.795" width="3.29" height="3.29" fill="#d4d4d4"/></svg>
<div class="b" style="left:1728px;top:633px;width:38.5px;height:32px;background:#ebecf0;border:1px solid #c3cbe6;border-radius:5px;"></div><svg class="b" style="left:1736.75px;top:638.5px;width:21px;height:21px" viewBox="0 0 21 21"><defs><linearGradient id="hb1728" x1="0" x2="1"><stop offset="0" stop-color="#bbb"/><stop offset="1" stop-color="#fff"/></linearGradient></defs><circle cx="10.500" cy="10.500" r="9.500" fill="#0a0a0a" stroke="#111" stroke-width="1.200"/><path d="M10.500 1a9.500 9.500 0 0 0 0 19z" fill="url(#hb1728)"/><path d="M10.500 0v21" stroke="#111" stroke-width="1.100"/><path d="M12 6.500q4 4 0 8" stroke="#fff" stroke-width="1.300" fill="none"/></svg>
<span class="t" style="left:1402.0px;top:675px;font-size:15.0px;line-height:15px;color:#333;letter-spacing:-0.106px;">Rugosité</span>
<span class="t" style="left:1632.0px;top:675px;font-size:15.0px;line-height:15px;color:#333;letter-spacing:-0.053px;">Opacité</span>
<div class="b" style="left:1320px;top:694px;width:218.5px;height:22px;background:#ebecf0;border:1px solid #c3cbe6;border-radius:3px;"></div>
<div class="b" style="left:1321px;top:695px;width:36px;height:20px;background:#818181;border-radius:2px 0 0 2px;"></div>
<div class="b" style="left:1355px;top:694px;width:45.5px;height:22px;background:#fff;border:1.300px solid #333;border-radius:4px;"></div>
<span class="t" style="left:1363.0px;top:697px;font-size:15.5px;line-height:16px;color:#777;letter-spacing:-0.809px;">20%</span>
<div class="b" style="left:1546px;top:694px;width:220px;height:22px;background:#818181;border:1px solid #c3cbe6;border-radius:3px;"></div>
<div class="b" style="left:1720.5px;top:694px;width:45.5px;height:22px;background:#fff;border:1.300px solid #333;border-radius:4px;"></div>
<span class="t" style="left:1725.5px;top:697px;font-size:15.5px;line-height:16px;color:#777;letter-spacing:-1.041px;">100%</span>
<div class="b" style="left:1320px;top:725.5px;width:407.5px;height:31.5px;background:#ebecf0;border:1px solid #c3cbe6;"></div>
<span class="t" style="left:1449.0px;top:734px;font-size:15.0px;line-height:15px;color:#555;letter-spacing:-0.143px;">Paramètres détaillés</span>
<svg class="b" style="left:1712px;top:736px;width:12px;height:10px" viewBox="0 0 12 10"><path d="M0 0h12l-6 10z" fill="#4f4f4f"/></svg>
<div class="b" style="left:1734px;top:725.5px;width:32.5px;height:31.5px;background:#ebecf0;border:1px solid #c3cbe6;"></div>
<svg class="b" style="left:1734.5px;top:725.5px;width:31px;height:30px" viewBox="0 0 31 30"><path d="M12 8q2-7 9-5.500t3 11" fill="none" stroke="#2e9a34" stroke-width="1.500"/><path d="M8 13q8-9 19-9" fill="none" stroke="#d9251d" stroke-width="1.500"/><path d="M9 9q4 8 15 9" fill="none" stroke="#5a7ad8" stroke-width="1.200"/><circle cx="26.500" cy="4.500" r="2.300" fill="#d9151d"/><circle cx="8.500" cy="8" r="2.300" fill="#2b49c3"/><path d="M3 26.500V13q0-1 1-1h5.500l2 2.500h9.500q1 0 1 1v2" fill="#f3cf62" stroke="#2b2414" stroke-width="1.400"/><circle cx="17" cy="12.500" r="3.200" fill="#f0c020" stroke="#7a5a10" stroke-width="0.600"/><circle cx="16" cy="11.500" r="1" fill="#fff8c0"/><path d="M3 27L7.500 16.500H27.500L23 27z" fill="#f8d35a" stroke="#2b2414" stroke-width="1.500" stroke-linejoin="round"/><path d="M8.300 17.800h17.500l-1.200 2.800H7.200z" fill="#fdeaa5" opacity="0.85"/><path d="M19 23.500l3-2.500M19 23.500l3.500 1.500" stroke="#6ab04c" stroke-width="1" fill="none"/></svg>
<svg class="b" style="left:1300.1px;top:776.305px;width:9.8px;height:6.39px" viewBox="0 0 9.8 6.39"><path d="M.8 .8L4.9 5.39L9 .8" fill="none" stroke="#222" stroke-width="1.9"/></svg>
<span class="t" style="left:1317.0px;top:770px;font-size:18.0px;line-height:18px;color:#2a2a2a;letter-spacing:-0.027px;">Couleur de base / Aspect métallique / Rugosité</span>
<div class="b" style="left:1694px;top:778.5px;width:54px;height:1px;background:#e1e4ec;"></div>
<svg class="b" style="left:1752.5px;top:771.5px;width:13px;height:13px" viewBox="0 0 13 13"><path d="M1 1L12 12M12 1L1 12" stroke="#1a1a1a" stroke-width="1.6"/></svg>
<span class="t" style="left:1320.0px;top:807px;font-size:15.0px;line-height:15px;color:#333;letter-spacing:-0.173px;">Coul.</span>
<div class="b" style="left:1400px;top:802px;width:63.5px;height:25px;background:#fbfbfc;border:1px solid #c3cbe6;border-radius:2px;"></div>
<div class="b" style="left:1445px;top:802.5px;width:1px;height:24px;background:#c3cbe6;"></div><div class="b" style="left:1446px;top:803px;width:16.5px;height:23px;background:#ebecf0;"></div>
<svg class="b" style="left:1450.25px;top:812.663px;width:8.5px;height:5.675px" viewBox="0 0 8.5 5.675"><path d="M.8 .8L4.25 4.675L7.7 .8" fill="none" stroke="#333" stroke-width="1.3"/></svg>
<svg class="b" style="left:1403.2px;top:805.7px;width:13.5px;height:13.5px" viewBox="0 0 13.5 13.5"><rect width="13.5" height="13.5" rx="0.800" fill="#050505"/><rect x="5.105" y="1.415" width="3.29" height="3.29" fill="#f4f4f4"/><rect x="1.415" y="5.105" width="3.29" height="3.29" fill="#ededed"/><rect x="8.795" y="5.105" width="3.29" height="3.29" fill="#dcdcdc"/><rect x="5.105" y="8.795" width="3.29" height="3.29" fill="#d4d4d4"/></svg>
<div class="b" style="left:1472px;top:805px;width:21.5px;height:20.5px;background:#a07b5a;border:1px solid #b9a592;"></div>
<span class="t" style="left:1497.0px;top:807px;font-size:15.5px;line-height:16px;color:#333;letter-spacing:-0.311px;">Vertigo-501...</span>
<div class="b" style="left:1587px;top:797px;width:42px;height:35px;background:#d3daf2;border-radius:5px 0 0 5px;"></div>
<div class="b" style="left:1594px;top:800px;width:28.5px;height:28px;background:#e9e9e9;border:1.500px solid #222;background-image:linear-gradient(45deg,#bdbdbd 25%,transparent 25%,transparent 75%,#bdbdbd 75%),linear-gradient(45deg,#bdbdbd 25%,transparent 25%,transparent 75%,#bdbdbd 75%);background-size:14px 14px;background-position:0 0,7px 7px;"></div>
<div class="b" style="left:1595px;top:801px;width:26.500px;height:26px;overflow:hidden"><span class="t" style="left:-2.500px;top:-13px;width:31px;text-align:center;font-family:'Liberation Serif',serif;font-style:italic;font-weight:bold;font-size:41px;line-height:41px;color:#000;transform:scaleX(0.84);">α</span></div>
<svg class="b" style="left:1632px;top:803px;width:24px;height:24px" viewBox="0 0 24 24"><g stroke-linecap="butt"><path d="M2.200 2.200L21.800 21.800M21.800 2.200L2.200 21.800" stroke="#8c0a0a" stroke-width="4.700"/><path d="M2.500 2.500L21.500 21.500M21.500 2.500L2.500 21.500" stroke="#dd0303" stroke-width="3.300"/></g></svg>
<svg class="b" style="left:1665px;top:803px;width:18px;height:24px" viewBox="0 0 18 24"><defs><radialGradient id="bg1674815" cx="0.38" cy="0.32" r="0.75"><stop offset="0" stop-color="#fffbe4"/><stop offset="0.45" stop-color="#fbe48a"/><stop offset="1" stop-color="#e8b040"/></radialGradient></defs><path d="M9 0.700C4 0.700 .8 4.200 .8 8.400c0 3 1.700 4.800 3 6.800 .8 1.300 1.200 2.500 1.300 3.800h7.800c.1-1.300 .5-2.500 1.300-3.800 1.300-2 3-3.800 3-6.800C17.200 4.200 14 .7 9 .7z" fill="url(#bg1674815)" stroke="#6a6248" stroke-width="1.100"/><path d="M5.600 19h6.800v2.300c0 1.300-1.200 2.100-3.400 2.100s-3.400-.8-3.400-2.100z" fill="#b0b0b0" stroke="#333" stroke-width="1"/><path d="M5.800 20.600h6.400" stroke="#444" stroke-width="0.9"/></svg>
<div class="b" style="left:1699px;top:804px;width:64px;height:23px;background:#fff;border:1px solid #c3cbe6;border-radius:4px;"></div><div class="b" style="left:1700px;top:805px;width:62px;height:21px;background:#818181;border-radius:3px;"></div><span class="t" style="left:1712.4px;top:808px;font-size:15.5px;line-height:16px;color:#fff;letter-spacing:-0.680px;">100%</span>
<span class="t" style="left:1320.0px;top:845px;font-size:15.0px;line-height:15px;color:#333;letter-spacing:0.326px;">Métallique</span>
<div class="b" style="left:1400px;top:841px;width:222.5px;height:23.5px;background:#ebecf0;border:1px solid #c3cbe6;border-radius:4px;"></div>
<div class="b" style="left:1400px;top:841px;width:36.5px;height:23.5px;background:#fff;border:1.300px solid #333;border-radius:4px;"></div>
<span class="t" style="left:1404.0px;top:845px;font-size:15.5px;line-height:16px;color:#888;letter-spacing:-0.619px;">0.00</span>
<svg class="b" style="left:1633px;top:840px;width:25px;height:25px" viewBox="0 0 25 25"><rect x="0" y="0" width="20" height="20" fill="#0a0a0a"/><rect x="8" y="2" width="5.500" height="5.500" fill="#fff"/><rect x="2.500" y="7.500" width="5.500" height="5.500" fill="#e4e4e4"/><rect x="13.500" y="7.500" width="5" height="5.500" fill="#ddd"/><rect x="8" y="13" width="5.500" height="5" fill="#ccc"/><circle cx="19.500" cy="20" r="4.600" fill="#111"/><path d="M19.500 16.800v6.400M16.300 20h6.400" stroke="#fff" stroke-width="1.900"/></svg>
<svg class="b" style="left:1662px;top:845px;width:25px;height:18px" viewBox="0 0 25 18"><defs><linearGradient id="fd167045" x1="0" y1="0" x2="0" y2="1"><stop offset="0" stop-color="#fde9a0"/><stop offset="0.35" stop-color="#f9d25a"/><stop offset="1" stop-color="#efac28"/></linearGradient></defs><path d="M1.500 16.500V3.500q0-1 1-1h5.500l2 2.500h8.500q1 0 1 1v2" fill="#f3c44e" stroke="#2a2412" stroke-width="1.300"/><path d="M1.500 16.800L5.200 7.800h19l-4 9z" fill="url(#fd167045)" stroke="#1e1a0c" stroke-width="1.400" stroke-linejoin="round"/></svg>
<div class="b" style="left:1699px;top:841.5px;width:64px;height:23px;background:#dadada;border:1px solid #dedfe6;border-radius:4px;"></div><span class="t" style="left:1712.4px;top:846px;font-size:15.5px;line-height:16px;color:#f5f5f5;letter-spacing:-0.680px;">100%</span>
<span class="t" style="left:1320.0px;top:879px;font-size:15.0px;line-height:15px;color:#333;letter-spacing:-0.106px;">Rugosité</span>
<div class="b" style="left:1400px;top:875px;width:64.5px;height:23.5px;background:#fff;border:1px solid #c3cbe6;border-radius:4px;"></div>
<div class="b" style="left:1401.5px;top:876.5px;width:12px;height:20.5px;background:#818181;border-radius:3px;"></div>
<span class="t" style="left:1419.0px;top:879px;font-size:15.5px;line-height:16px;color:#888;letter-spacing:-0.619px;">0.20</span>
<div class="b" style="left:1472px;top:875.5px;width:21.5px;height:21px;background:#eaeaeb;border:1px solid #dddde0;"></div>
<span class="t" style="left:1497.0px;top:879px;font-size:15.5px;line-height:16px;color:#333;letter-spacing:-0.396px;">Vertigo-5010-Teak...</span>
<svg class="b" style="left:1632px;top:874.5px;width:24px;height:24px" viewBox="0 0 24 24"><g stroke-linecap="butt"><path d="M2.200 2.200L21.800 21.800M21.800 2.200L2.200 21.800" stroke="#8c0a0a" stroke-width="4.700"/><path d="M2.500 2.500L21.500 21.500M21.500 2.500L2.500 21.500" stroke="#dd0303" stroke-width="3.300"/></g></svg>
<svg class="b" style="left:1665px;top:874px;width:18px;height:24px" viewBox="0 0 18 24"><defs><radialGradient id="bg1674886" cx="0.38" cy="0.32" r="0.75"><stop offset="0" stop-color="#fffbe4"/><stop offset="0.45" stop-color="#fbe48a"/><stop offset="1" stop-color="#e8b040"/></radialGradient></defs><path d="M9 0.700C4 0.700 .8 4.200 .8 8.400c0 3 1.700 4.800 3 6.800 .8 1.300 1.200 2.500 1.300 3.800h7.800c.1-1.300 .5-2.500 1.300-3.800 1.300-2 3-3.800 3-6.800C17.200 4.200 14 .7 9 .7z" fill="url(#bg1674886)" stroke="#6a6248" stroke-width="1.100"/><path d="M5.600 19h6.800v2.300c0 1.300-1.200 2.100-3.400 2.100s-3.400-.8-3.400-2.100z" fill="#b0b0b0" stroke="#333" stroke-width="1"/><path d="M5.800 20.600h6.400" stroke="#444" stroke-width="0.9"/></svg>
<div class="b" style="left:1699px;top:875.5px;width:64px;height:23px;background:#fff;border:1px solid #c3cbe6;border-radius:4px;"></div><div class="b" style="left:1700px;top:876.5px;width:62px;height:21px;background:#818181;border-radius:3px;"></div><span class="t" style="left:1712.4px;top:880px;font-size:15.5px;line-height:16px;color:#fff;letter-spacing:-0.680px;">100%</span>
<svg class="b" style="left:1300.1px;top:930.305px;width:9.8px;height:6.39px" viewBox="0 0 9.8 6.39"><path d="M.8 .8L4.9 5.39L9 .8" fill="none" stroke="#222" stroke-width="1.9"/></svg>
<span class="t" style="left:1317.0px;top:924px;font-size:18.0px;line-height:18px;color:#2a2a2a;letter-spacing:-0.072px;">Relief / Normal et déplacement</span>
<div class="b" style="left:1566px;top:932.5px;width:182px;height:1px;background:#e1e4ec;"></div>
<svg class="b" style="left:1752.5px;top:925.5px;width:13px;height:13px" viewBox="0 0 13 13"><path d="M1 1L12 12M12 1L1 12" stroke="#1a1a1a" stroke-width="1.6"/></svg>
<span class="t" style="left:1320.0px;top:959px;font-size:15.0px;line-height:15px;color:#333;letter-spacing:0.102px;">Relief / Normal</span>
<div class="b" style="left:1472px;top:955.5px;width:21.5px;height:21px;background:#8081fb;border:1px solid #a8a9f5;"></div>
<span class="t" style="left:1497.0px;top:958px;font-size:15.5px;line-height:16px;color:#333;letter-spacing:-0.396px;">Vertigo-5010-Teak...</span>
<svg class="b" style="left:1632px;top:953.3px;width:24px;height:24px" viewBox="0 0 24 24"><g stroke-linecap="butt"><path d="M2.200 2.200L21.800 21.800M21.800 2.200L2.200 21.800" stroke="#8c0a0a" stroke-width="4.700"/><path d="M2.500 2.500L21.500 21.500M21.500 2.500L2.500 21.500" stroke="#dd0303" stroke-width="3.300"/></g></svg>
<svg class="b" style="left:1665px;top:953px;width:18px;height:24px" viewBox="0 0 18 24"><defs><radialGradient id="bg1674965" cx="0.38" cy="0.32" r="0.75"><stop offset="0" stop-color="#fffbe4"/><stop offset="0.45" stop-color="#fbe48a"/><stop offset="1" stop-color="#e8b040"/></radialGradient></defs><path d="M9 0.700C4 0.700 .8 4.200 .8 8.400c0 3 1.700 4.800 3 6.800 .8 1.300 1.200 2.500 1.300 3.800h7.800c.1-1.300 .5-2.500 1.300-3.800 1.300-2 3-3.800 3-6.800C17.200 4.200 14 .7 9 .7z" fill="url(#bg1674965)" stroke="#6a6248" stroke-width="1.100"/><path d="M5.600 19h6.800v2.300c0 1.300-1.200 2.100-3.400 2.100s-3.400-.8-3.400-2.100z" fill="#b0b0b0" stroke="#333" stroke-width="1"/><path d="M5.800 20.600h6.400" stroke="#444" stroke-width="0.9"/></svg>
<div class="b" style="left:1699px;top:954.3px;width:64px;height:23px;background:#fff;border:1px solid #c3cbe6;border-radius:4px;"></div><div class="b" style="left:1700px;top:955.3px;width:39.68px;height:21px;background:#818181;border-radius:3px 0 0 3px;"></div><span class="t" style="left:1716.4px;top:958px;font-size:15.5px;line-height:16px;color:#444;letter-spacing:-0.745px;">30%</span><div class="b" style="left:1700px;top:954.3px;width:39.68px;height:23px;overflow:hidden"><span class="t" style="left:16.4px;top:4px;font-size:15.5px;line-height:16px;color:#fff;letter-spacing:-0.745px;">30%</span></div>
<div class="b" style="left:1293px;top:985px;width:503px;height:9px;overflow:hidden"><div class="b" style="left:179px;top:5px;width:21.5px;height:20px;background:#f4f4f6;border:1px solid #dcdcdc;"></div><div class="b" style="left:0;top:-985px"><svg class="b" style="left:339px;top:988px;width:24px;height:24px" viewBox="0 0 24 24"><g stroke-linecap="butt"><path d="M2.200 2.200L21.800 21.800M21.800 2.200L2.200 21.800" stroke="#8c0a0a" stroke-width="4.700"/><path d="M2.500 2.500L21.500 21.500M21.500 2.500L2.500 21.500" stroke="#dd0303" stroke-width="3.300"/></g></svg><svg class="b" style="left:372px;top:988px;width:18px;height:24px" viewBox="0 0 18 24"><defs><radialGradient id="bg382000" cx="0.38" cy="0.32" r="0.75"><stop offset="0" stop-color="#fffbe4"/><stop offset="0.45" stop-color="#fbe48a"/><stop offset="1" stop-color="#e8b040"/></radialGradient></defs><path d="M9 0.700C4 0.700 .8 4.200 .8 8.400c0 3 1.700 4.800 3 6.800 .8 1.300 1.200 2.500 1.300 3.800h7.800c.1-1.300 .5-2.500 1.300-3.800 1.300-2 3-3.800 3-6.800C17.200 4.200 14 .7 9 .7z" fill="url(#bg382000)" stroke="#6a6248" stroke-width="1.100"/><path d="M5.600 19h6.800v2.300c0 1.300-1.200 2.100-3.400 2.100s-3.400-.8-3.400-2.100z" fill="#b0b0b0" stroke="#333" stroke-width="1"/><path d="M5.800 20.600h6.400" stroke="#444" stroke-width="0.9"/></svg></div><div class="b" style="left:401px;top:4.5px;width:75px;height:20px;background:#fff;border:1px solid #c3cbe6;border-radius:3px;"></div></div>
</div></body></html>
